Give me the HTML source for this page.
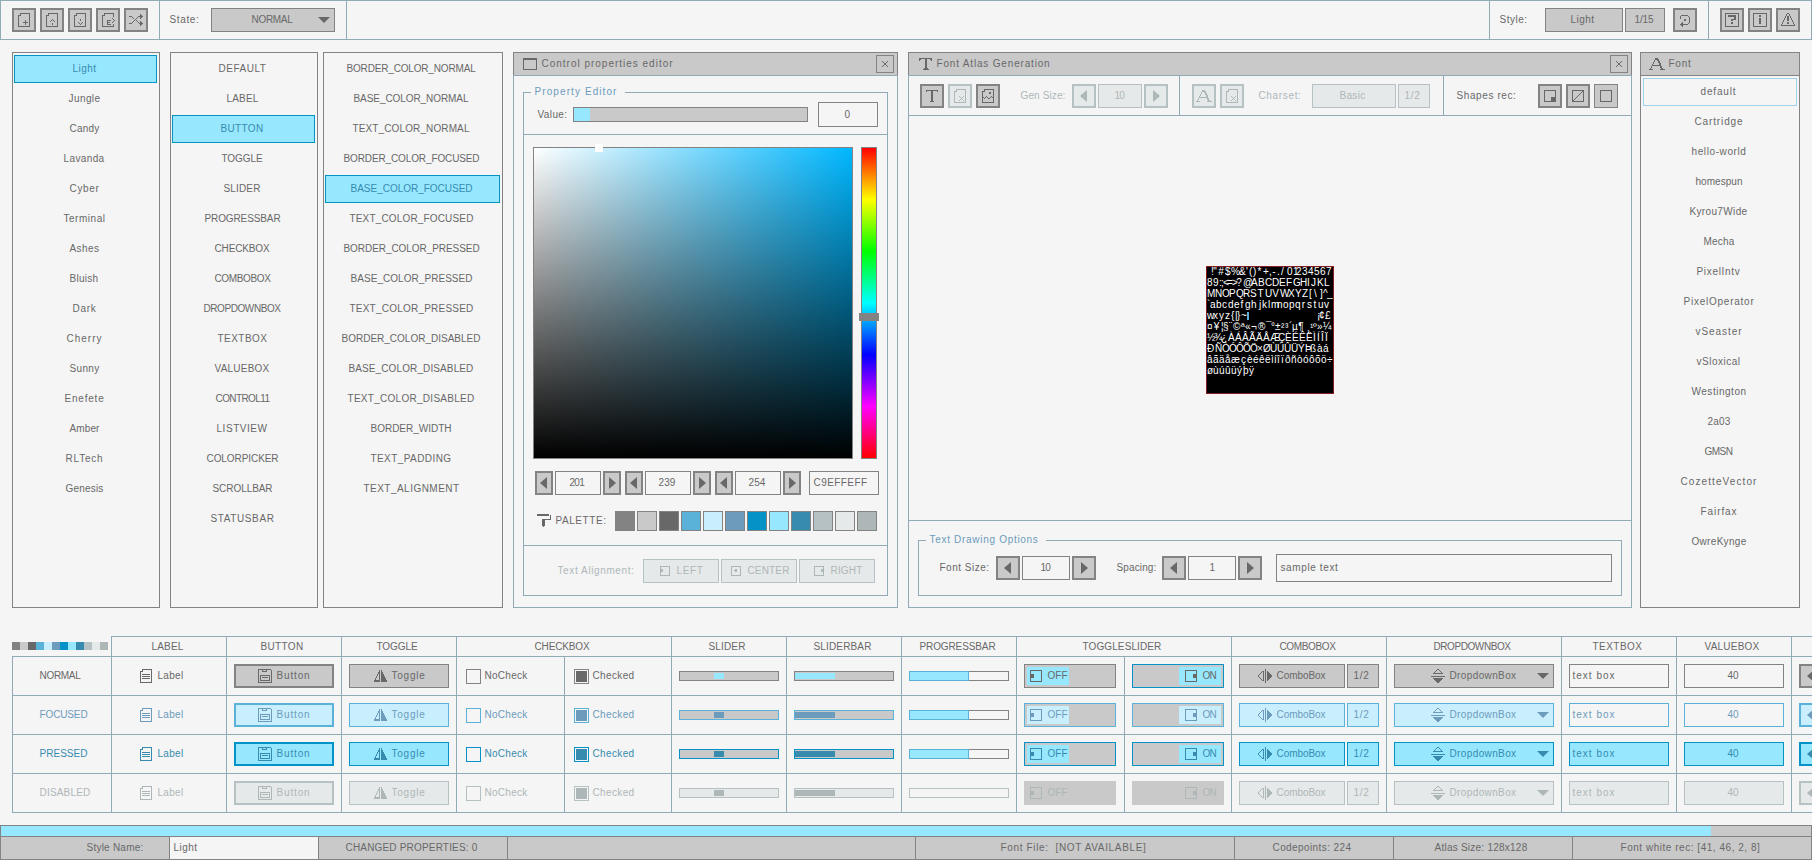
<!DOCTYPE html>
<html><head><meta charset="utf-8"><style>
html,body{margin:0;padding:0;}
body{width:1812px;height:860px;position:relative;overflow:hidden;background:#f5f5f5;font-family:"Liberation Sans",sans-serif;}
.a{position:absolute;box-sizing:border-box;}
.t{font-size:10px;white-space:nowrap;}
.g{position:absolute;height:10px;line-height:10px;font-size:10px;color:#fff;text-align:center;white-space:nowrap;}
</style></head><body>
<div class="a" style="left:0px;top:0px;width:1812px;height:40px;box-shadow:inset 0 0 0 1px #90abb5;"></div>
<div class="a" style="left:159px;top:0px;width:1px;height:40px;background:#90abb5"></div>
<div class="a" style="left:346px;top:0px;width:1px;height:40px;background:#90abb5"></div>
<div class="a" style="left:1489px;top:0px;width:1px;height:40px;background:#90abb5"></div>
<div class="a" style="left:1708px;top:0px;width:1px;height:40px;background:#90abb5"></div>
<div class="a" style="left:12px;top:8px;width:24px;height:24px;background:#c9c9c9;box-shadow:inset 0 0 0 2px #838383;"></div>
<svg class="a" style="left:16px;top:12px" width="16" height="16" shape-rendering="crispEdges"><path d="M4 1h10v1h-10zM4 2h1v1h-1zM13 2h1v1h-1zM2 3h3v1h-3zM13 3h1v1h-1zM2 4h1v1h-1zM13 4h1v1h-1zM2 5h1v1h-1zM13 5h1v1h-1zM2 6h1v1h-1zM13 6h1v1h-1zM2 7h1v1h-1zM13 7h1v1h-1zM2 8h1v1h-1zM9 8h1v1h-1zM13 8h1v1h-1zM2 9h1v1h-1zM9 9h1v1h-1zM13 9h1v1h-1zM2 10h1v1h-1zM7 10h5v1h-5zM13 10h1v1h-1zM2 11h1v1h-1zM9 11h1v1h-1zM13 11h1v1h-1zM2 12h1v1h-1zM9 12h1v1h-1zM13 12h1v1h-1zM2 13h1v1h-1zM13 13h1v1h-1zM2 14h12v1h-12z" fill="#686868"/></svg>
<div class="a" style="left:40px;top:8px;width:24px;height:24px;background:#c9c9c9;box-shadow:inset 0 0 0 2px #838383;"></div>
<svg class="a" style="left:44px;top:12px" width="16" height="16" shape-rendering="crispEdges"><path d="M4 1h10v1h-10zM4 2h1v1h-1zM13 2h1v1h-1zM2 3h3v1h-3zM13 3h1v1h-1zM2 4h1v1h-1zM13 4h1v1h-1zM2 5h1v1h-1zM13 5h1v1h-1zM2 6h1v1h-1zM13 6h1v1h-1zM2 7h1v1h-1zM8 7h1v1h-1zM13 7h1v1h-1zM2 8h1v1h-1zM7 8h1v1h-1zM9 8h1v1h-1zM13 8h1v1h-1zM2 9h1v1h-1zM6 9h1v1h-1zM10 9h1v1h-1zM13 9h1v1h-1zM2 10h1v1h-1zM13 10h1v1h-1zM2 11h1v1h-1zM8 11h1v1h-1zM13 11h1v1h-1zM2 12h1v1h-1zM8 12h1v1h-1zM13 12h1v1h-1zM2 13h1v1h-1zM13 13h1v1h-1zM2 14h12v1h-12z" fill="#686868"/></svg>
<div class="a" style="left:68px;top:8px;width:24px;height:24px;background:#c9c9c9;box-shadow:inset 0 0 0 2px #838383;"></div>
<svg class="a" style="left:72px;top:12px" width="16" height="16" shape-rendering="crispEdges"><path d="M4 1h10v1h-10zM4 2h1v1h-1zM13 2h1v1h-1zM2 3h3v1h-3zM13 3h1v1h-1zM2 4h1v1h-1zM13 4h1v1h-1zM2 5h1v1h-1zM13 5h1v1h-1zM2 6h1v1h-1zM13 6h1v1h-1zM2 7h1v1h-1zM8 7h1v1h-1zM13 7h1v1h-1zM2 8h1v1h-1zM8 8h1v1h-1zM13 8h1v1h-1zM2 9h1v1h-1zM13 9h1v1h-1zM2 10h1v1h-1zM6 10h1v1h-1zM10 10h1v1h-1zM13 10h1v1h-1zM2 11h1v1h-1zM7 11h1v1h-1zM9 11h1v1h-1zM13 11h1v1h-1zM2 12h1v1h-1zM8 12h1v1h-1zM13 12h1v1h-1zM2 13h1v1h-1zM13 13h1v1h-1zM2 14h12v1h-12z" fill="#686868"/></svg>
<div class="a" style="left:96px;top:8px;width:24px;height:24px;background:#c9c9c9;box-shadow:inset 0 0 0 2px #838383;"></div>
<svg class="a" style="left:100px;top:12px" width="16" height="16" shape-rendering="crispEdges"><path d="M4 1h10v1h-10zM4 2h1v1h-1zM13 2h1v1h-1zM2 3h3v1h-3zM13 3h1v1h-1zM2 4h1v1h-1zM13 4h1v1h-1zM2 5h1v1h-1zM2 6h1v1h-1zM12 6h1v1h-1zM2 7h1v1h-1zM13 7h1v1h-1zM2 8h1v1h-1zM7 8h4v1h-4zM14 8h1v1h-1zM2 9h1v1h-1zM7 9h1v1h-1zM13 9h1v1h-1zM2 10h1v1h-1zM7 10h3v1h-3zM12 10h1v1h-1zM2 11h1v1h-1zM7 11h1v1h-1zM2 12h1v1h-1zM7 12h4v1h-4zM13 12h1v1h-1zM2 13h1v1h-1zM13 13h1v1h-1zM2 14h12v1h-12z" fill="#686868"/></svg>
<div class="a" style="left:124px;top:8px;width:24px;height:24px;background:#c9c9c9;box-shadow:inset 0 0 0 2px #838383;"></div>
<svg class="a" style="left:128px;top:12px" width="16" height="16" shape-rendering="crispEdges"><path d="M12 2h1v1h-1zM12 3h2v1h-2zM1 4h3v1h-3zM10 4h5v1h-5zM4 5h1v1h-1zM9 5h1v1h-1zM12 5h2v1h-2zM5 6h1v1h-1zM8 6h1v1h-1zM12 6h1v1h-1zM7 7h1v1h-1zM6 8h1v1h-1zM8 8h1v1h-1zM5 9h1v1h-1zM9 9h1v1h-1zM12 9h1v1h-1zM4 10h1v1h-1zM10 10h1v1h-1zM12 10h2v1h-2zM1 11h3v1h-3zM11 11h4v1h-4zM12 12h2v1h-2zM12 13h1v1h-1z" fill="#686868"/></svg>
<div class="a t" style="left:169.5px;top:8px;width:40px;height:24px;line-height:24px;color:#686868;text-align:left;font-size:10px;"><span style="letter-spacing:0.64px;margin-right:-0.64px">State:</span></div>
<div class="a" style="left:211px;top:8px;width:124px;height:24px;background:#c9c9c9;box-shadow:inset 0 0 0 1px #838383;"></div>
<div class="a t" style="left:251.5px;top:8px;width:51px;height:24px;line-height:24px;color:#686868;text-align:left;font-size:10px;"><span style="letter-spacing:-0.30px;margin-right:0.30px">NORMAL</span></div>
<svg class="a" style="left:318px;top:17px" width="12" height="6" viewBox="0 0 12 6"><path d="M0 0H12L6.0 6z" fill="#686868"/></svg>
<div class="a t" style="left:1499.5px;top:8px;width:44px;height:24px;line-height:24px;color:#686868;text-align:left;font-size:10px;"><span style="letter-spacing:0.50px;margin-right:-0.50px">Style:</span></div>
<div class="a" style="left:1545px;top:8px;width:78px;height:24px;background:#c9c9c9;box-shadow:inset 0 0 0 1px #838383;"></div>
<div class="a t" style="left:1570.5px;top:8px;width:34px;height:24px;line-height:24px;color:#686868;text-align:left;font-size:10px;"><span style="letter-spacing:0.46px;margin-right:-0.46px">Light</span></div>
<div class="a" style="left:1625px;top:8px;width:40px;height:24px;background:#c9c9c9;box-shadow:inset 0 0 0 1px #838383;"></div>
<div class="a t" style="left:1634.5px;top:8px;width:29px;height:24px;line-height:24px;color:#686868;text-align:left;font-size:10px;"><span style="letter-spacing:-0.12px;margin-right:0.12px">1/15</span></div>
<div class="a" style="left:1673px;top:8px;width:24px;height:24px;background:#c9c9c9;box-shadow:inset 0 0 0 2px #838383;"></div>
<svg class="a" style="left:1677px;top:12px" width="16" height="16" shape-rendering="crispEdges"><path d="M4 3h7v1h-7zM3 4h1v1h-1zM11 4h1v1h-1zM3 5h1v1h-1zM12 5h1v1h-1zM3 6h1v1h-1zM12 6h1v1h-1zM7 7h2v1h-2zM12 7h1v1h-1zM7 8h2v1h-2zM12 8h1v1h-1zM12 9h1v1h-1zM5 10h1v1h-1zM12 10h1v1h-1zM4 11h2v1h-2zM11 11h1v1h-1zM3 12h8v1h-8zM4 13h2v1h-2zM5 14h1v1h-1z" fill="#686868"/></svg>
<div class="a" style="left:1720px;top:8px;width:24px;height:24px;background:#c9c9c9;box-shadow:inset 0 0 0 2px #838383;"></div>
<svg class="a" style="left:1724px;top:12px" width="16" height="16" shape-rendering="crispEdges"><path d="M1 1h14v1h-14zM1 2h1v1h-1zM14 2h1v1h-1zM1 3h1v1h-1zM4 3h8v1h-8zM14 3h1v1h-1zM1 4h1v1h-1zM4 4h8v1h-8zM14 4h1v1h-1zM1 5h1v1h-1zM10 5h2v1h-2zM14 5h1v1h-1zM1 6h1v1h-1zM10 6h2v1h-2zM14 6h1v1h-1zM1 7h1v1h-1zM7 7h5v1h-5zM14 7h1v1h-1zM1 8h1v1h-1zM7 8h2v1h-2zM14 8h1v1h-1zM1 9h1v1h-1zM14 9h1v1h-1zM1 10h1v1h-1zM7 10h2v1h-2zM14 10h1v1h-1zM1 11h1v1h-1zM7 11h2v1h-2zM14 11h1v1h-1zM1 12h1v1h-1zM14 12h1v1h-1zM1 13h1v1h-1zM14 13h1v1h-1zM1 14h14v1h-14z" fill="#686868"/></svg>
<div class="a" style="left:1748px;top:8px;width:24px;height:24px;background:#c9c9c9;box-shadow:inset 0 0 0 2px #838383;"></div>
<svg class="a" style="left:1752px;top:12px" width="16" height="16" shape-rendering="crispEdges"><path d="M1 1h14v1h-14zM1 2h1v1h-1zM14 2h1v1h-1zM1 3h1v1h-1zM7 3h2v1h-2zM14 3h1v1h-1zM1 4h1v1h-1zM7 4h2v1h-2zM14 4h1v1h-1zM1 5h1v1h-1zM14 5h1v1h-1zM1 6h1v1h-1zM7 6h2v1h-2zM14 6h1v1h-1zM1 7h1v1h-1zM7 7h2v1h-2zM14 7h1v1h-1zM1 8h1v1h-1zM7 8h2v1h-2zM14 8h1v1h-1zM1 9h1v1h-1zM7 9h2v1h-2zM14 9h1v1h-1zM1 10h1v1h-1zM7 10h2v1h-2zM14 10h1v1h-1zM1 11h1v1h-1zM7 11h2v1h-2zM14 11h1v1h-1zM1 12h1v1h-1zM14 12h1v1h-1zM1 13h1v1h-1zM14 13h1v1h-1zM1 14h14v1h-14z" fill="#686868"/></svg>
<div class="a" style="left:1776px;top:8px;width:24px;height:24px;background:#c9c9c9;box-shadow:inset 0 0 0 2px #838383;"></div>
<svg class="a" style="left:1780px;top:12px" width="16" height="16" shape-rendering="crispEdges"><path d="M7 1h2v1h-2zM6 2h1v1h-1zM9 2h1v1h-1zM6 3h1v1h-1zM9 3h1v1h-1zM5 4h1v1h-1zM7 4h2v1h-2zM10 4h1v1h-1zM5 5h1v1h-1zM7 5h2v1h-2zM10 5h1v1h-1zM4 6h1v1h-1zM7 6h2v1h-2zM11 6h1v1h-1zM4 7h1v1h-1zM7 7h2v1h-2zM11 7h1v1h-1zM3 8h1v1h-1zM7 8h2v1h-2zM12 8h1v1h-1zM3 9h1v1h-1zM12 9h1v1h-1zM2 10h1v1h-1zM7 10h2v1h-2zM13 10h1v1h-1zM2 11h1v1h-1zM7 11h2v1h-2zM13 11h1v1h-1zM1 12h1v1h-1zM14 12h1v1h-1zM1 13h14v1h-14z" fill="#686868"/></svg>
<div class="a" style="left:12px;top:52px;width:148px;height:556px;box-shadow:inset 0 0 0 1px #838383;"></div>
<div class="a" style="left:14px;top:55px;width:143px;height:28px;background:#97e8ff;box-shadow:inset 0 0 0 1px #0492c7;"></div>
<div class="a t" style="left:72.5px;top:55px;width:34px;height:28px;line-height:28px;color:#368baf;text-align:left;font-size:10px;"><span style="letter-spacing:0.46px;margin-right:-0.46px">Light</span></div>
<div class="a t" style="left:68.5px;top:85px;width:42px;height:28px;line-height:28px;color:#686868;text-align:left;font-size:10px;"><span style="letter-spacing:0.42px;margin-right:-0.42px">Jungle</span></div>
<div class="a t" style="left:69.5px;top:115px;width:40px;height:28px;line-height:28px;color:#686868;text-align:left;font-size:10px;"><span style="letter-spacing:0.22px;margin-right:-0.22px">Candy</span></div>
<div class="a t" style="left:63.5px;top:145px;width:51px;height:28px;line-height:28px;color:#686868;text-align:left;font-size:10px;"><span style="letter-spacing:0.38px;margin-right:-0.38px">Lavanda</span></div>
<div class="a t" style="left:69.5px;top:175px;width:40px;height:28px;line-height:28px;color:#686868;text-align:left;font-size:10px;"><span style="letter-spacing:0.66px;margin-right:-0.66px">Cyber</span></div>
<div class="a t" style="left:63.5px;top:205px;width:52px;height:28px;line-height:28px;color:#686868;text-align:left;font-size:10px;"><span style="letter-spacing:0.53px;margin-right:-0.53px">Terminal</span></div>
<div class="a t" style="left:69.5px;top:235px;width:40px;height:28px;line-height:28px;color:#686868;text-align:left;font-size:10px;"><span style="letter-spacing:0.44px;margin-right:-0.44px">Ashes</span></div>
<div class="a t" style="left:69.5px;top:265px;width:39px;height:28px;line-height:28px;color:#686868;text-align:left;font-size:10px;"><span style="letter-spacing:0.29px;margin-right:-0.29px">Bluish</span></div>
<div class="a t" style="left:72.5px;top:295px;width:34px;height:28px;line-height:28px;color:#686868;text-align:left;font-size:10px;"><span style="letter-spacing:0.72px;margin-right:-0.72px">Dark</span></div>
<div class="a t" style="left:66.5px;top:325px;width:46px;height:28px;line-height:28px;color:#686868;text-align:left;font-size:10px;"><span style="letter-spacing:1.00px;margin-right:-1.00px">Cherry</span></div>
<div class="a t" style="left:69.5px;top:355px;width:40px;height:28px;line-height:28px;color:#686868;text-align:left;font-size:10px;"><span style="letter-spacing:0.33px;margin-right:-0.33px">Sunny</span></div>
<div class="a t" style="left:64.5px;top:385px;width:50px;height:28px;line-height:28px;color:#686868;text-align:left;font-size:10px;"><span style="letter-spacing:0.79px;margin-right:-0.79px">Enefete</span></div>
<div class="a t" style="left:69.5px;top:415px;width:40px;height:28px;line-height:28px;color:#686868;text-align:left;font-size:10px;"><span style="letter-spacing:0.11px;margin-right:-0.11px">Amber</span></div>
<div class="a t" style="left:65.5px;top:445px;width:48px;height:28px;line-height:28px;color:#686868;text-align:left;font-size:10px;"><span style="letter-spacing:0.80px;margin-right:-0.80px">RLTech</span></div>
<div class="a t" style="left:65.5px;top:475px;width:48px;height:28px;line-height:28px;color:#686868;text-align:left;font-size:10px;"><span style="letter-spacing:0.19px;margin-right:-0.19px">Genesis</span></div>
<div class="a" style="left:170px;top:52px;width:148px;height:556px;box-shadow:inset 0 0 0 1px #838383;"></div>
<div class="a t" style="left:218.5px;top:55px;width:58px;height:28px;line-height:28px;color:#686868;text-align:left;font-size:10px;"><span style="letter-spacing:0.53px;margin-right:-0.53px">DEFAULT</span></div>
<div class="a t" style="left:226.5px;top:85px;width:42px;height:28px;line-height:28px;color:#686868;text-align:left;font-size:10px;"><span style="letter-spacing:0.17px;margin-right:-0.17px">LABEL</span></div>
<div class="a" style="left:172px;top:115px;width:143px;height:28px;background:#97e8ff;box-shadow:inset 0 0 0 1px #0492c7;"></div>
<div class="a t" style="left:220.5px;top:115px;width:53px;height:28px;line-height:28px;color:#368baf;text-align:left;font-size:10px;"><span style="letter-spacing:0.34px;margin-right:-0.34px">BUTTON</span></div>
<div class="a t" style="left:221.5px;top:145px;width:51px;height:28px;line-height:28px;color:#686868;text-align:left;font-size:10px;"><span style="letter-spacing:-0.08px;margin-right:0.08px">TOGGLE</span></div>
<div class="a t" style="left:223.5px;top:175px;width:47px;height:28px;line-height:28px;color:#686868;text-align:left;font-size:10px;"><span style="letter-spacing:0.15px;margin-right:-0.15px">SLIDER</span></div>
<div class="a t" style="left:204.5px;top:205px;width:86px;height:28px;line-height:28px;color:#686868;text-align:left;font-size:10px;"><span style="letter-spacing:-0.11px;margin-right:0.11px">PROGRESSBAR</span></div>
<div class="a t" style="left:214.5px;top:235px;width:65px;height:28px;line-height:28px;color:#686868;text-align:left;font-size:10px;"><span style="letter-spacing:-0.14px;margin-right:0.14px">CHECKBOX</span></div>
<div class="a t" style="left:214.5px;top:265px;width:66px;height:28px;line-height:28px;color:#686868;text-align:left;font-size:10px;"><span style="letter-spacing:-0.36px;margin-right:0.36px">COMBOBOX</span></div>
<div class="a t" style="left:203.5px;top:295px;width:87px;height:28px;line-height:28px;color:#686868;text-align:left;font-size:10px;"><span style="letter-spacing:-0.42px;margin-right:0.42px">DROPDOWNBOX</span></div>
<div class="a t" style="left:217.5px;top:325px;width:60px;height:28px;line-height:28px;color:#686868;text-align:left;font-size:10px;"><span style="letter-spacing:0.47px;margin-right:-0.47px">TEXTBOX</span></div>
<div class="a t" style="left:214.5px;top:355px;width:65px;height:28px;line-height:28px;color:#686868;text-align:left;font-size:10px;"><span style="letter-spacing:0.23px;margin-right:-0.23px">VALUEBOX</span></div>
<div class="a t" style="left:215.5px;top:385px;width:64px;height:28px;line-height:28px;color:#686868;text-align:left;font-size:10px;"><span style="letter-spacing:-0.59px;margin-right:0.59px">CONTROL11</span></div>
<div class="a t" style="left:216.5px;top:415px;width:61px;height:28px;line-height:28px;color:#686868;text-align:left;font-size:10px;"><span style="letter-spacing:0.54px;margin-right:-0.54px">LISTVIEW</span></div>
<div class="a t" style="left:206.5px;top:445px;width:82px;height:28px;line-height:28px;color:#686868;text-align:left;font-size:10px;"><span style="letter-spacing:-0.07px;margin-right:0.07px">COLORPICKER</span></div>
<div class="a t" style="left:212.5px;top:475px;width:70px;height:28px;line-height:28px;color:#686868;text-align:left;font-size:10px;"><span style="letter-spacing:-0.06px;margin-right:0.06px">SCROLLBAR</span></div>
<div class="a t" style="left:210.5px;top:505px;width:74px;height:28px;line-height:28px;color:#686868;text-align:left;font-size:10px;"><span style="letter-spacing:0.61px;margin-right:-0.61px">STATUSBAR</span></div>
<div class="a" style="left:323px;top:52px;width:180px;height:556px;box-shadow:inset 0 0 0 1px #838383;"></div>
<div class="a t" style="left:346.5px;top:55px;width:139px;height:28px;line-height:28px;color:#686868;text-align:left;font-size:10px;"><span style="letter-spacing:-0.17px;margin-right:0.17px">BORDER_COLOR_NORMAL</span></div>
<div class="a t" style="left:353.5px;top:85px;width:125px;height:28px;line-height:28px;color:#686868;text-align:left;font-size:10px;"><span style="letter-spacing:-0.07px;margin-right:0.07px">BASE_COLOR_NORMAL</span></div>
<div class="a t" style="left:352.5px;top:115px;width:127px;height:28px;line-height:28px;color:#686868;text-align:left;font-size:10px;"><span style="letter-spacing:0.12px;margin-right:-0.12px">TEXT_COLOR_NORMAL</span></div>
<div class="a t" style="left:343.5px;top:145px;width:146px;height:28px;line-height:28px;color:#686868;text-align:left;font-size:10px;"><span style="letter-spacing:-0.12px;margin-right:0.12px">BORDER_COLOR_FOCUSED</span></div>
<div class="a" style="left:325px;top:175px;width:175px;height:28px;background:#97e8ff;box-shadow:inset 0 0 0 1px #0492c7;"></div>
<div class="a t" style="left:350.5px;top:175px;width:132px;height:28px;line-height:28px;color:#368baf;text-align:left;font-size:10px;"><span style="letter-spacing:-0.01px;margin-right:0.01px">BASE_COLOR_FOCUSED</span></div>
<div class="a t" style="left:349.5px;top:205px;width:134px;height:28px;line-height:28px;color:#686868;text-align:left;font-size:10px;"><span style="letter-spacing:0.16px;margin-right:-0.16px">TEXT_COLOR_FOCUSED</span></div>
<div class="a t" style="left:343.5px;top:235px;width:146px;height:28px;line-height:28px;color:#686868;text-align:left;font-size:10px;"><span style="letter-spacing:-0.06px;margin-right:0.06px">BORDER_COLOR_PRESSED</span></div>
<div class="a t" style="left:350.5px;top:265px;width:132px;height:28px;line-height:28px;color:#686868;text-align:left;font-size:10px;"><span style="letter-spacing:0.05px;margin-right:-0.05px">BASE_COLOR_PRESSED</span></div>
<div class="a t" style="left:349.5px;top:295px;width:134px;height:28px;line-height:28px;color:#686868;text-align:left;font-size:10px;"><span style="letter-spacing:0.22px;margin-right:-0.22px">TEXT_COLOR_PRESSED</span></div>
<div class="a t" style="left:341.5px;top:325px;width:149px;height:28px;line-height:28px;color:#686868;text-align:left;font-size:10px;"><span style="letter-spacing:0.00px;margin-right:-0.00px">BORDER_COLOR_DISABLED</span></div>
<div class="a t" style="left:348.5px;top:355px;width:135px;height:28px;line-height:28px;color:#686868;text-align:left;font-size:10px;"><span style="letter-spacing:0.11px;margin-right:-0.11px">BASE_COLOR_DISABLED</span></div>
<div class="a t" style="left:347.5px;top:385px;width:137px;height:28px;line-height:28px;color:#686868;text-align:left;font-size:10px;"><span style="letter-spacing:0.28px;margin-right:-0.28px">TEXT_COLOR_DISABLED</span></div>
<div class="a t" style="left:370.5px;top:415px;width:91px;height:28px;line-height:28px;color:#686868;text-align:left;font-size:10px;"><span style="letter-spacing:-0.01px;margin-right:0.01px">BORDER_WIDTH</span></div>
<div class="a t" style="left:370.5px;top:445px;width:91px;height:28px;line-height:28px;color:#686868;text-align:left;font-size:10px;"><span style="letter-spacing:0.42px;margin-right:-0.42px">TEXT_PADDING</span></div>
<div class="a t" style="left:363.5px;top:475px;width:106px;height:28px;line-height:28px;color:#686868;text-align:left;font-size:10px;"><span style="letter-spacing:0.47px;margin-right:-0.47px">TEXT_ALIGNMENT</span></div>
<div class="a" style="left:513px;top:52px;width:385px;height:556px;box-shadow:inset 0 0 0 1px #90abb5;"></div>
<div class="a" style="left:513px;top:52px;width:385px;height:24px;background:#c9c9c9;box-shadow:inset 0 0 0 1px #838383;"></div>
<div class="a" style="left:513px;top:75px;width:385px;height:1px;background:#90abb5"></div>
<svg class="a" style="left:522px;top:56px" width="16" height="16" shape-rendering="crispEdges"><path d="M1 2h14v1h-14zM1 3h14v1h-14zM1 4h1v1h-1zM14 4h1v1h-1zM1 5h1v1h-1zM14 5h1v1h-1zM1 6h1v1h-1zM14 6h1v1h-1zM1 7h1v1h-1zM14 7h1v1h-1zM1 8h1v1h-1zM14 8h1v1h-1zM1 9h1v1h-1zM14 9h1v1h-1zM1 10h1v1h-1zM14 10h1v1h-1zM1 11h1v1h-1zM14 11h1v1h-1zM1 12h1v1h-1zM14 12h1v1h-1zM1 13h14v1h-14z" fill="#686868"/></svg>
<div class="a t" style="left:541.5px;top:52px;width:136px;height:24px;line-height:24px;color:#686868;text-align:left;font-size:10px;"><span style="letter-spacing:0.99px;margin-right:-0.99px">Control properties editor</span></div>
<div class="a" style="left:876px;top:55px;width:18px;height:18px;box-shadow:inset 0 0 0 1px #838383;"></div>
<svg class="a" style="left:877px;top:56px" width="16" height="16" shape-rendering="crispEdges"><path d="M5 5h1v1h-1zM10 5h1v1h-1zM6 6h1v1h-1zM9 6h1v1h-1zM7 7h2v1h-2zM7 8h2v1h-2zM6 9h1v1h-1zM9 9h1v1h-1zM5 10h1v1h-1zM10 10h1v1h-1z" fill="#686868"/></svg>
<div class="a" style="left:523px;top:92px;width:1px;height:504px;background:#90abb5"></div>
<div class="a" style="left:523px;top:595px;width:365px;height:1px;background:#90abb5"></div>
<div class="a" style="left:887px;top:92px;width:1px;height:504px;background:#90abb5"></div>
<div class="a" style="left:523px;top:92px;width:8px;height:1px;background:#90abb5"></div>
<div class="a t" style="left:534.5px;top:86px;width:87px;height:12px;line-height:12px;color:#6c9bbc;text-align:left;font-size:10px;"><span style="letter-spacing:1.09px;margin-right:-1.09px">Property Editor</span></div>
<div class="a" style="left:625px;top:92px;width:263px;height:1px;background:#90abb5"></div>
<div class="a" style="left:523px;top:134px;width:365px;height:1px;background:#90abb5"></div>
<div class="a" style="left:523px;top:545px;width:365px;height:1px;background:#90abb5"></div>
<div class="a t" style="left:537.5px;top:102px;width:40px;height:25px;line-height:25px;color:#686868;text-align:left;font-size:10px;"><span style="letter-spacing:0.40px;margin-right:-0.40px">Value:</span></div>
<div class="a" style="left:573px;top:107px;width:235px;height:15px;background:#c9c9c9;box-shadow:inset 0 0 0 1px #838383;"></div>
<div class="a" style="left:574px;top:108px;width:16px;height:13px;background:#97e8ff;"></div>
<div class="a" style="left:818px;top:102px;width:60px;height:25px;box-shadow:inset 0 0 0 1px #838383;"></div>
<div class="a t" style="left:844.5px;top:102px;width:15px;height:25px;line-height:25px;color:#686868;text-align:left;font-size:10px;"><span style="letter-spacing:-0.56px;margin-right:0.56px">0</span></div>
<div class="a" style="left:533px;top:147px;width:320px;height:312px;border:1px solid #838383;background:linear-gradient(to bottom, rgba(0,0,0,0), #000), linear-gradient(to right, #fff, rgb(0,183,255));"></div>
<div class="a" style="left:595px;top:144px;width:8px;height:8px;background:#ffffff;"></div>
<div class="a" style="left:861px;top:147px;width:16px;height:312px;border:1px solid #838383;background:linear-gradient(to bottom, #f00 0%, #ff0 16.67%, #0f0 33.33%, #0ff 50%, #00f 66.67%, #f0f 83.33%, #f00 100%);"></div>
<div class="a" style="left:859px;top:313px;width:20px;height:8px;background:#838383;"></div>
<div class="a" style="left:535px;top:471px;width:18px;height:24px;background:#c9c9c9;box-shadow:inset 0 0 0 2px #838383;"></div>
<svg class="a" style="left:540px;top:477px" width="7" height="12" viewBox="0 0 7 12"><path d="M7 0V12L0 6.0z" fill="#686868"/></svg>
<div class="a" style="left:555px;top:471px;width:46px;height:24px;box-shadow:inset 0 0 0 1px #838383;"></div>
<div class="a t" style="left:569.5px;top:471px;width:24px;height:24px;line-height:24px;color:#686868;text-align:left;font-size:10px;"><span style="letter-spacing:-0.70px;margin-right:0.70px">201</span></div>
<div class="a" style="left:603px;top:471px;width:18px;height:24px;background:#c9c9c9;box-shadow:inset 0 0 0 2px #838383;"></div>
<svg class="a" style="left:609px;top:477px" width="7" height="12" viewBox="0 0 7 12"><path d="M0 0V12L7 6.0z" fill="#686868"/></svg>
<div class="a" style="left:625px;top:471px;width:18px;height:24px;background:#c9c9c9;box-shadow:inset 0 0 0 2px #838383;"></div>
<svg class="a" style="left:630px;top:477px" width="7" height="12" viewBox="0 0 7 12"><path d="M7 0V12L0 6.0z" fill="#686868"/></svg>
<div class="a" style="left:645px;top:471px;width:46px;height:24px;box-shadow:inset 0 0 0 1px #838383;"></div>
<div class="a t" style="left:658.5px;top:471px;width:27px;height:24px;line-height:24px;color:#686868;text-align:left;font-size:10px;"><span style="letter-spacing:0.10px;margin-right:-0.10px">239</span></div>
<div class="a" style="left:693px;top:471px;width:18px;height:24px;background:#c9c9c9;box-shadow:inset 0 0 0 2px #838383;"></div>
<svg class="a" style="left:699px;top:477px" width="7" height="12" viewBox="0 0 7 12"><path d="M0 0V12L7 6.0z" fill="#686868"/></svg>
<div class="a" style="left:715px;top:471px;width:18px;height:24px;background:#c9c9c9;box-shadow:inset 0 0 0 2px #838383;"></div>
<svg class="a" style="left:720px;top:477px" width="7" height="12" viewBox="0 0 7 12"><path d="M7 0V12L0 6.0z" fill="#686868"/></svg>
<div class="a" style="left:735px;top:471px;width:46px;height:24px;box-shadow:inset 0 0 0 1px #838383;"></div>
<div class="a t" style="left:748.5px;top:471px;width:27px;height:24px;line-height:24px;color:#686868;text-align:left;font-size:10px;"><span style="letter-spacing:0.10px;margin-right:-0.10px">254</span></div>
<div class="a" style="left:783px;top:471px;width:18px;height:24px;background:#c9c9c9;box-shadow:inset 0 0 0 2px #838383;"></div>
<svg class="a" style="left:789px;top:477px" width="7" height="12" viewBox="0 0 7 12"><path d="M0 0V12L7 6.0z" fill="#686868"/></svg>
<div class="a" style="left:809px;top:471px;width:70px;height:24px;box-shadow:inset 0 0 0 1px #838383;"></div>
<div class="a t" style="left:813.5px;top:471px;width:64px;height:24px;line-height:24px;color:#686868;text-align:left;font-size:10px;"><span style="letter-spacing:0.43px;margin-right:-0.43px">C9EFFEFF</span></div>
<svg class="a" style="left:536px;top:513px" width="16" height="16" shape-rendering="crispEdges"><path d="M1 1h12v1h-12zM1 2h12v1h-12zM14 2h1v1h-1zM14 3h1v1h-1zM14 4h1v1h-1zM14 5h1v1h-1zM6 6h9v1h-9zM6 7h3v1h-3zM6 8h3v1h-3zM6 9h3v1h-3zM6 10h3v1h-3zM6 11h3v1h-3zM6 12h3v1h-3zM7 13h1v1h-1z" fill="#686868"/></svg>
<div class="a t" style="left:555.5px;top:511px;width:60px;height:20px;line-height:20px;color:#686868;text-align:left;font-size:10px;"><span style="letter-spacing:0.56px;margin-right:-0.56px">PALETTE:</span></div>
<div class="a" style="left:615px;top:511px;width:20px;height:20px;background:#838383;box-shadow:inset 0 0 0 1px #838383;"></div>
<div class="a" style="left:637px;top:511px;width:20px;height:20px;background:#c9c9c9;box-shadow:inset 0 0 0 1px #838383;"></div>
<div class="a" style="left:659px;top:511px;width:20px;height:20px;background:#686868;box-shadow:inset 0 0 0 1px #838383;"></div>
<div class="a" style="left:681px;top:511px;width:20px;height:20px;background:#5bb2d9;box-shadow:inset 0 0 0 1px #838383;"></div>
<div class="a" style="left:703px;top:511px;width:20px;height:20px;background:#c9effe;box-shadow:inset 0 0 0 1px #838383;"></div>
<div class="a" style="left:725px;top:511px;width:20px;height:20px;background:#6c9bbc;box-shadow:inset 0 0 0 1px #838383;"></div>
<div class="a" style="left:747px;top:511px;width:20px;height:20px;background:#0492c7;box-shadow:inset 0 0 0 1px #838383;"></div>
<div class="a" style="left:769px;top:511px;width:20px;height:20px;background:#97e8ff;box-shadow:inset 0 0 0 1px #838383;"></div>
<div class="a" style="left:791px;top:511px;width:20px;height:20px;background:#368baf;box-shadow:inset 0 0 0 1px #838383;"></div>
<div class="a" style="left:813px;top:511px;width:20px;height:20px;background:#b5c1c2;box-shadow:inset 0 0 0 1px #838383;"></div>
<div class="a" style="left:835px;top:511px;width:20px;height:20px;background:#e6e9e9;box-shadow:inset 0 0 0 1px #838383;"></div>
<div class="a" style="left:857px;top:511px;width:20px;height:20px;background:#aeb7b8;box-shadow:inset 0 0 0 1px #838383;"></div>
<div class="a t" style="left:557.5px;top:559px;width:96px;height:24px;line-height:24px;color:#aeb7b8;text-align:left;font-size:10px;"><span style="letter-spacing:0.61px;margin-right:-0.61px">Text Alignment:</span></div>
<div class="a" style="left:643px;top:559px;width:76px;height:24px;background:#e6e9e9;box-shadow:inset 0 0 0 1px #b5c1c2;"></div>
<svg class="a" style="left:657px;top:563px" width="16" height="16" shape-rendering="crispEdges"><path d="M3 3h10v1h-10zM3 4h1v1h-1zM12 4h1v1h-1zM3 5h1v1h-1zM12 5h1v1h-1zM3 6h3v1h-3zM12 6h1v1h-1zM3 7h3v1h-3zM12 7h1v1h-1zM3 8h3v1h-3zM12 8h1v1h-1zM3 9h1v1h-1zM12 9h1v1h-1zM3 10h1v1h-1zM12 10h1v1h-1zM3 11h1v1h-1zM12 11h1v1h-1zM3 12h10v1h-10z" fill="#aeb7b8"/></svg>
<div class="a t" style="left:676.5px;top:559px;width:31px;height:24px;line-height:24px;color:#aeb7b8;text-align:left;font-size:10px;"><span style="letter-spacing:0.64px;margin-right:-0.64px">LEFT</span></div>
<div class="a" style="left:721px;top:559px;width:76px;height:24px;background:#e6e9e9;box-shadow:inset 0 0 0 1px #b5c1c2;"></div>
<svg class="a" style="left:728px;top:563px" width="16" height="16" shape-rendering="crispEdges"><path d="M3 3h10v1h-10zM3 4h1v1h-1zM12 4h1v1h-1zM3 5h1v1h-1zM12 5h1v1h-1zM3 6h1v1h-1zM7 6h2v1h-2zM12 6h1v1h-1zM3 7h1v1h-1zM6 7h3v1h-3zM12 7h1v1h-1zM3 8h1v1h-1zM7 8h2v1h-2zM12 8h1v1h-1zM3 9h1v1h-1zM12 9h1v1h-1zM3 10h1v1h-1zM12 10h1v1h-1zM3 11h1v1h-1zM12 11h1v1h-1zM3 12h10v1h-10z" fill="#aeb7b8"/></svg>
<div class="a t" style="left:747.5px;top:559px;width:46px;height:24px;line-height:24px;color:#aeb7b8;text-align:left;font-size:10px;"><span style="letter-spacing:0.15px;margin-right:-0.15px">CENTER</span></div>
<div class="a" style="left:799px;top:559px;width:76px;height:24px;background:#e6e9e9;box-shadow:inset 0 0 0 1px #b5c1c2;"></div>
<svg class="a" style="left:811px;top:563px" width="16" height="16" shape-rendering="crispEdges"><path d="M3 3h10v1h-10zM3 4h1v1h-1zM12 4h1v1h-1zM3 5h1v1h-1zM12 5h1v1h-1zM3 6h1v1h-1zM10 6h3v1h-3zM3 7h1v1h-1zM10 7h3v1h-3zM3 8h1v1h-1zM10 8h3v1h-3zM3 9h1v1h-1zM12 9h1v1h-1zM3 10h1v1h-1zM12 10h1v1h-1zM3 11h1v1h-1zM12 11h1v1h-1zM3 12h10v1h-10z" fill="#aeb7b8"/></svg>
<div class="a t" style="left:830.5px;top:559px;width:36px;height:24px;line-height:24px;color:#aeb7b8;text-align:left;font-size:10px;"><span style="letter-spacing:0.18px;margin-right:-0.18px">RIGHT</span></div>
<div class="a" style="left:908px;top:52px;width:724px;height:556px;box-shadow:inset 0 0 0 1px #90abb5;"></div>
<div class="a" style="left:908px;top:52px;width:724px;height:24px;background:#c9c9c9;box-shadow:inset 0 0 0 1px #838383;"></div>
<div class="a" style="left:908px;top:75px;width:724px;height:1px;background:#90abb5"></div>
<svg class="a" style="left:917px;top:56px" width="16" height="16" shape-rendering="crispEdges"><path d="M2 2h13v1h-13zM2 3h2v1h-2zM8 3h2v1h-2zM13 3h2v1h-2zM2 4h1v1h-1zM8 4h2v1h-2zM14 4h1v1h-1zM8 5h2v1h-2zM8 6h2v1h-2zM8 7h2v1h-2zM8 8h2v1h-2zM8 9h2v1h-2zM8 10h2v1h-2zM8 11h2v1h-2zM7 12h4v1h-4zM6 13h6v1h-6z" fill="#686868"/></svg>
<div class="a t" style="left:936.5px;top:52px;width:118px;height:24px;line-height:24px;color:#686868;text-align:left;font-size:10px;"><span style="letter-spacing:0.82px;margin-right:-0.82px">Font Atlas Generation</span></div>
<div class="a" style="left:1610px;top:55px;width:18px;height:18px;box-shadow:inset 0 0 0 1px #838383;"></div>
<svg class="a" style="left:1611px;top:56px" width="16" height="16" shape-rendering="crispEdges"><path d="M5 5h1v1h-1zM10 5h1v1h-1zM6 6h1v1h-1zM9 6h1v1h-1zM7 7h2v1h-2zM7 8h2v1h-2zM6 9h1v1h-1zM9 9h1v1h-1zM5 10h1v1h-1zM10 10h1v1h-1z" fill="#686868"/></svg>
<div class="a" style="left:908px;top:115px;width:724px;height:1px;background:#90abb5"></div>
<div class="a" style="left:1179px;top:76px;width:1px;height:39px;background:#90abb5"></div>
<div class="a" style="left:1443px;top:76px;width:1px;height:39px;background:#90abb5"></div>
<div class="a" style="left:920px;top:84px;width:24px;height:24px;background:#c9c9c9;box-shadow:inset 0 0 0 2px #838383;"></div>
<svg class="a" style="left:924px;top:88px" width="16" height="16" shape-rendering="crispEdges"><path d="M2 2h12v1h-12zM2 3h1v1h-1zM7 3h2v1h-2zM13 3h1v1h-1zM7 4h2v1h-2zM7 5h2v1h-2zM7 6h2v1h-2zM7 7h2v1h-2zM7 8h2v1h-2zM7 9h2v1h-2zM7 10h2v1h-2zM7 11h2v1h-2zM7 12h2v1h-2zM6 13h4v1h-4z" fill="#686868"/></svg>
<div class="a" style="left:948px;top:84px;width:24px;height:24px;background:#e6e9e9;box-shadow:inset 0 0 0 2px #b5c1c2;"></div>
<svg class="a" style="left:952px;top:88px" width="16" height="16" shape-rendering="crispEdges"><path d="M4 1h10v1h-10zM4 2h1v1h-1zM13 2h1v1h-1zM2 3h3v1h-3zM13 3h1v1h-1zM2 4h1v1h-1zM13 4h1v1h-1zM2 5h1v1h-1zM13 5h1v1h-1zM2 6h1v1h-1zM13 6h1v1h-1zM2 7h1v1h-1zM13 7h1v1h-1zM2 8h1v1h-1zM7 8h1v1h-1zM11 8h1v1h-1zM13 8h1v1h-1zM2 9h1v1h-1zM8 9h1v1h-1zM10 9h1v1h-1zM13 9h1v1h-1zM2 10h1v1h-1zM9 10h1v1h-1zM13 10h1v1h-1zM2 11h1v1h-1zM8 11h1v1h-1zM10 11h1v1h-1zM13 11h1v1h-1zM2 12h1v1h-1zM7 12h1v1h-1zM11 12h1v1h-1zM13 12h1v1h-1zM2 13h1v1h-1zM13 13h1v1h-1zM2 14h12v1h-12z" fill="#aeb7b8"/></svg>
<div class="a" style="left:976px;top:84px;width:24px;height:24px;background:#c9c9c9;box-shadow:inset 0 0 0 2px #838383;"></div>
<svg class="a" style="left:980px;top:88px" width="16" height="16" shape-rendering="crispEdges"><path d="M4 1h10v1h-10zM4 2h1v1h-1zM13 2h1v1h-1zM2 3h3v1h-3zM13 3h1v1h-1zM2 4h1v1h-1zM9 4h2v1h-2zM13 4h1v1h-1zM2 5h1v1h-1zM9 5h2v1h-2zM13 5h1v1h-1zM2 6h1v1h-1zM13 6h1v1h-1zM2 7h1v1h-1zM13 7h1v1h-1zM2 8h1v1h-1zM6 8h1v1h-1zM11 8h1v1h-1zM13 8h1v1h-1zM2 9h2v1h-2zM5 9h1v1h-1zM7 9h1v1h-1zM10 9h1v1h-1zM12 9h2v1h-2zM2 10h1v1h-1zM4 10h1v1h-1zM8 10h2v1h-2zM13 10h1v1h-1zM2 11h1v1h-1zM13 11h1v1h-1zM2 12h1v1h-1zM13 12h1v1h-1zM2 13h1v1h-1zM13 13h1v1h-1zM2 14h12v1h-12z" fill="#686868"/></svg>
<div class="a t" style="left:1020.5px;top:84px;width:50px;height:24px;line-height:24px;color:#aeb7b8;text-align:left;font-size:10px;"><span style="letter-spacing:0.12px;margin-right:-0.12px">Gen Size:</span></div>
<div class="a" style="left:1072px;top:84px;width:24px;height:24px;background:#e6e9e9;box-shadow:inset 0 0 0 2px #b5c1c2;"></div>
<svg class="a" style="left:1080px;top:90px" width="7" height="12" viewBox="0 0 7 12"><path d="M7 0V12L0 6.0z" fill="#aeb7b8"/></svg>
<div class="a" style="left:1098px;top:84px;width:44px;height:24px;background:#e6e9e9;box-shadow:inset 0 0 0 1px #b5c1c2;"></div>
<div class="a t" style="left:1114.5px;top:84px;width:18px;height:24px;line-height:24px;color:#aeb7b8;text-align:left;font-size:10px;"><span style="letter-spacing:-0.70px;margin-right:0.70px">10</span></div>
<div class="a" style="left:1144px;top:84px;width:24px;height:24px;background:#e6e9e9;box-shadow:inset 0 0 0 2px #b5c1c2;"></div>
<svg class="a" style="left:1153px;top:90px" width="7" height="12" viewBox="0 0 7 12"><path d="M0 0V12L7 6.0z" fill="#aeb7b8"/></svg>
<div class="a" style="left:1192px;top:84px;width:24px;height:24px;background:#e6e9e9;box-shadow:inset 0 0 0 2px #b5c1c2;"></div>
<svg class="a" style="left:1196px;top:88px" width="16" height="16" shape-rendering="crispEdges"><path d="M6 2h3v1h-3zM6 3h4v1h-4zM5 4h1v1h-1zM8 4h2v1h-2zM5 5h1v1h-1zM9 5h2v1h-2zM4 6h1v1h-1zM9 6h2v1h-2zM4 7h1v1h-1zM10 7h2v1h-2zM3 8h1v1h-1zM10 8h2v1h-2zM3 9h9v1h-9zM2 10h1v1h-1zM11 10h2v1h-2zM2 11h1v1h-1zM11 11h2v1h-2zM1 12h1v1h-1zM12 12h2v1h-2zM0 13h4v1h-4zM11 13h5v1h-5z" fill="#aeb7b8"/></svg>
<div class="a" style="left:1220px;top:84px;width:24px;height:24px;background:#e6e9e9;box-shadow:inset 0 0 0 2px #b5c1c2;"></div>
<svg class="a" style="left:1224px;top:88px" width="16" height="16" shape-rendering="crispEdges"><path d="M4 1h10v1h-10zM4 2h1v1h-1zM13 2h1v1h-1zM2 3h3v1h-3zM13 3h1v1h-1zM2 4h1v1h-1zM13 4h1v1h-1zM2 5h1v1h-1zM13 5h1v1h-1zM2 6h1v1h-1zM13 6h1v1h-1zM2 7h1v1h-1zM13 7h1v1h-1zM2 8h1v1h-1zM7 8h1v1h-1zM11 8h1v1h-1zM13 8h1v1h-1zM2 9h1v1h-1zM8 9h1v1h-1zM10 9h1v1h-1zM13 9h1v1h-1zM2 10h1v1h-1zM9 10h1v1h-1zM13 10h1v1h-1zM2 11h1v1h-1zM8 11h1v1h-1zM10 11h1v1h-1zM13 11h1v1h-1zM2 12h1v1h-1zM7 12h1v1h-1zM11 12h1v1h-1zM13 12h1v1h-1zM2 13h1v1h-1zM13 13h1v1h-1zM2 14h12v1h-12z" fill="#aeb7b8"/></svg>
<div class="a t" style="left:1258.5px;top:84px;width:50px;height:24px;line-height:24px;color:#aeb7b8;text-align:left;font-size:10px;"><span style="letter-spacing:0.65px;margin-right:-0.65px">Charset:</span></div>
<div class="a" style="left:1312px;top:84px;width:84px;height:24px;background:#e6e9e9;box-shadow:inset 0 0 0 1px #b5c1c2;"></div>
<div class="a t" style="left:1339.5px;top:84px;width:36px;height:24px;line-height:24px;color:#aeb7b8;text-align:left;font-size:10px;"><span style="letter-spacing:0.31px;margin-right:-0.31px">Basic</span></div>
<div class="a" style="left:1398px;top:84px;width:32px;height:24px;background:#e6e9e9;box-shadow:inset 0 0 0 1px #b5c1c2;"></div>
<div class="a t" style="left:1404.5px;top:84px;width:26px;height:24px;line-height:24px;color:#aeb7b8;text-align:left;font-size:10px;"><span style="letter-spacing:0.70px;margin-right:-0.70px">1/2</span></div>
<div class="a t" style="left:1456.5px;top:84px;width:80px;height:24px;line-height:24px;color:#686868;text-align:left;font-size:10px;"><span style="letter-spacing:0.60px;margin-right:-0.60px">Shapes rec:</span></div>
<div class="a" style="left:1538px;top:84px;width:24px;height:24px;background:#c9c9c9;box-shadow:inset 0 0 0 2px #838383;"></div>
<svg class="a" style="left:1542px;top:88px" width="16" height="16" shape-rendering="crispEdges"><path d="M2 2h12v1h-12zM2 3h1v1h-1zM13 3h1v1h-1zM2 4h1v1h-1zM13 4h1v1h-1zM2 5h1v1h-1zM13 5h1v1h-1zM2 6h1v1h-1zM13 6h1v1h-1zM2 7h1v1h-1zM13 7h1v1h-1zM2 8h1v1h-1zM13 8h1v1h-1zM2 9h1v1h-1zM9 9h5v1h-5zM2 10h1v1h-1zM9 10h5v1h-5zM2 11h1v1h-1zM9 11h5v1h-5zM2 12h1v1h-1zM9 12h5v1h-5zM2 13h12v1h-12z" fill="#686868"/></svg>
<div class="a" style="left:1566px;top:84px;width:24px;height:24px;background:#c9c9c9;box-shadow:inset 0 0 0 2px #838383;"></div>
<svg class="a" style="left:1570px;top:88px" width="16" height="16" shape-rendering="crispEdges"><path d="M2 2h12v1h-12zM2 3h1v1h-1zM12 3h2v1h-2zM2 4h1v1h-1zM11 4h1v1h-1zM13 4h1v1h-1zM2 5h1v1h-1zM10 5h1v1h-1zM13 5h1v1h-1zM2 6h1v1h-1zM9 6h1v1h-1zM13 6h1v1h-1zM2 7h1v1h-1zM8 7h1v1h-1zM13 7h1v1h-1zM2 8h1v1h-1zM7 8h1v1h-1zM13 8h1v1h-1zM2 9h1v1h-1zM6 9h1v1h-1zM13 9h1v1h-1zM2 10h1v1h-1zM5 10h1v1h-1zM13 10h1v1h-1zM2 11h1v1h-1zM4 11h1v1h-1zM13 11h1v1h-1zM2 12h2v1h-2zM13 12h1v1h-1zM2 13h12v1h-12z" fill="#686868"/></svg>
<div class="a" style="left:1594px;top:84px;width:24px;height:24px;background:#c9c9c9;box-shadow:inset 0 0 0 1px #838383;"></div>
<svg class="a" style="left:1598px;top:88px" width="16" height="16" shape-rendering="crispEdges"><path d="M2 2h12v1h-12zM2 3h1v1h-1zM13 3h1v1h-1zM2 4h1v1h-1zM13 4h1v1h-1zM2 5h1v1h-1zM13 5h1v1h-1zM2 6h1v1h-1zM13 6h1v1h-1zM2 7h1v1h-1zM13 7h1v1h-1zM2 8h1v1h-1zM13 8h1v1h-1zM2 9h1v1h-1zM13 9h1v1h-1zM2 10h1v1h-1zM13 10h1v1h-1zM2 11h1v1h-1zM13 11h1v1h-1zM2 12h1v1h-1zM13 12h1v1h-1zM2 13h12v1h-12z" fill="#686868"/></svg>
<div class="a" style="left:1206px;top:266px;width:128px;height:128px;background:#000;"></div>
<div class="a" style="left:1206px;top:266px;width:128px;height:128px;overflow:hidden"><div class="g" style="left:5px;top:1px;width:1px">!</div><div class="g" style="left:7px;top:1px;width:4px">&quot;</div><div class="g" style="left:12px;top:1px;width:6px">#</div><div class="g" style="left:19px;top:1px;width:5px">$</div><div class="g" style="left:25px;top:1px;width:7px">%</div><div class="g" style="left:33px;top:1px;width:6px">&amp;</div><div class="g" style="left:40px;top:1px;width:2px">&#x27;</div><div class="g" style="left:43px;top:1px;width:3px">(</div><div class="g" style="left:47px;top:1px;width:3px">)</div><div class="g" style="left:51px;top:1px;width:5px">*</div><div class="g" style="left:57px;top:1px;width:5px">+</div><div class="g" style="left:63px;top:1px;width:2px">,</div><div class="g" style="left:66px;top:1px;width:4px">-</div><div class="g" style="left:71px;top:1px;width:1px">.</div><div class="g" style="left:73px;top:1px;width:7px">/</div><div class="g" style="left:81px;top:1px;width:5px">0</div><div class="g" style="left:87px;top:1px;width:2px">1</div><div class="g" style="left:90px;top:1px;width:5px">2</div><div class="g" style="left:96px;top:1px;width:5px">3</div><div class="g" style="left:102px;top:1px;width:5px">4</div><div class="g" style="left:108px;top:1px;width:5px">5</div><div class="g" style="left:114px;top:1px;width:5px">6</div><div class="g" style="left:120px;top:1px;width:5px">7</div><div class="g" style="left:1px;top:12px;width:5px">8</div><div class="g" style="left:7px;top:12px;width:5px">9</div><div class="g" style="left:13px;top:12px;width:1px">:</div><div class="g" style="left:15px;top:12px;width:1px">;</div><div class="g" style="left:17px;top:12px;width:3px">&lt;</div><div class="g" style="left:21px;top:12px;width:4px">=</div><div class="g" style="left:26px;top:12px;width:3px">&gt;</div><div class="g" style="left:30px;top:12px;width:6px">?</div><div class="g" style="left:37px;top:12px;width:7px">@</div><div class="g" style="left:45px;top:12px;width:6px">A</div><div class="g" style="left:52px;top:12px;width:6px">B</div><div class="g" style="left:59px;top:12px;width:6px">C</div><div class="g" style="left:66px;top:12px;width:6px">D</div><div class="g" style="left:73px;top:12px;width:6px">E</div><div class="g" style="left:80px;top:12px;width:6px">F</div><div class="g" style="left:87px;top:12px;width:6px">G</div><div class="g" style="left:94px;top:12px;width:6px">H</div><div class="g" style="left:101px;top:12px;width:3px">I</div><div class="g" style="left:105px;top:12px;width:5px">J</div><div class="g" style="left:111px;top:12px;width:6px">K</div><div class="g" style="left:118px;top:12px;width:5px">L</div><div class="g" style="left:1px;top:23px;width:7px">M</div><div class="g" style="left:9px;top:23px;width:6px">N</div><div class="g" style="left:16px;top:23px;width:6px">O</div><div class="g" style="left:23px;top:23px;width:6px">P</div><div class="g" style="left:30px;top:23px;width:6px">Q</div><div class="g" style="left:37px;top:23px;width:6px">R</div><div class="g" style="left:44px;top:23px;width:6px">S</div><div class="g" style="left:51px;top:23px;width:7px">T</div><div class="g" style="left:59px;top:23px;width:6px">U</div><div class="g" style="left:66px;top:23px;width:7px">V</div><div class="g" style="left:74px;top:23px;width:7px">W</div><div class="g" style="left:82px;top:23px;width:6px">X</div><div class="g" style="left:89px;top:23px;width:6px">Y</div><div class="g" style="left:96px;top:23px;width:6px">Z</div><div class="g" style="left:103px;top:23px;width:2px">[</div><div class="g" style="left:106px;top:23px;width:7px">\</div><div class="g" style="left:114px;top:23px;width:2px">]</div><div class="g" style="left:117px;top:23px;width:3px">^</div><div class="g" style="left:121px;top:23px;width:5px">_</div><div class="g" style="left:1px;top:34px;width:2px">`</div><div class="g" style="left:4px;top:34px;width:5px">a</div><div class="g" style="left:10px;top:34px;width:5px">b</div><div class="g" style="left:16px;top:34px;width:5px">c</div><div class="g" style="left:22px;top:34px;width:5px">d</div><div class="g" style="left:28px;top:34px;width:5px">e</div><div class="g" style="left:34px;top:34px;width:4px">f</div><div class="g" style="left:39px;top:34px;width:5px">g</div><div class="g" style="left:45px;top:34px;width:5px">h</div><div class="g" style="left:53px;top:34px;width:2px">j</div><div class="g" style="left:56px;top:34px;width:5px">k</div><div class="g" style="left:62px;top:34px;width:2px">l</div><div class="g" style="left:65px;top:34px;width:5px">m</div><div class="g" style="left:71px;top:34px;width:5px">n</div><div class="g" style="left:77px;top:34px;width:5px">o</div><div class="g" style="left:83px;top:34px;width:5px">p</div><div class="g" style="left:89px;top:34px;width:5px">q</div><div class="g" style="left:95px;top:34px;width:5px">r</div><div class="g" style="left:101px;top:34px;width:5px">s</div><div class="g" style="left:107px;top:34px;width:4px">t</div><div class="g" style="left:112px;top:34px;width:5px">u</div><div class="g" style="left:118px;top:34px;width:5px">v</div><div class="g" style="left:1px;top:45px;width:5px">w</div><div class="g" style="left:7px;top:45px;width:5px">x</div><div class="g" style="left:13px;top:45px;width:5px">y</div><div class="g" style="left:19px;top:45px;width:5px">z</div><div class="g" style="left:25px;top:45px;width:3px">{</div><div class="g" style="left:29px;top:45px;width:1px">|</div><div class="g" style="left:31px;top:45px;width:3px">}</div><div class="g" style="left:35px;top:45px;width:4px">~</div><div class="g" style="left:111px;top:45px;width:1px">¡</div><div class="g" style="left:113px;top:45px;width:5px">¢</div><div class="g" style="left:119px;top:45px;width:5px">£</div><div class="g" style="left:1px;top:56px;width:5px">¤</div><div class="g" style="left:7px;top:56px;width:7px">¥</div><div class="g" style="left:15px;top:56px;width:1px">¦</div><div class="g" style="left:17px;top:56px;width:5px">§</div><div class="g" style="left:23px;top:56px;width:3px">¨</div><div class="g" style="left:27px;top:56px;width:7px">©</div><div class="g" style="left:35px;top:56px;width:3px">ª</div><div class="g" style="left:39px;top:56px;width:5px">«</div><div class="g" style="left:45px;top:56px;width:4px">¬</div><div class="g" style="left:52px;top:56px;width:7px">®</div><div class="g" style="left:60px;top:56px;width:4px">¯</div><div class="g" style="left:65px;top:56px;width:3px">°</div><div class="g" style="left:69px;top:56px;width:5px">±</div><div class="g" style="left:75px;top:56px;width:3px">²</div><div class="g" style="left:79px;top:56px;width:3px">³</div><div class="g" style="left:83px;top:56px;width:2px">´</div><div class="g" style="left:86px;top:56px;width:5px">µ</div><div class="g" style="left:92px;top:56px;width:6px">¶</div><div class="g" style="left:101px;top:56px;width:2px">¸</div><div class="g" style="left:104px;top:56px;width:2px">¹</div><div class="g" style="left:107px;top:56px;width:3px">º</div><div class="g" style="left:111px;top:56px;width:5px">»</div><div class="g" style="left:117px;top:56px;width:6px">¼</div><div class="g" style="left:1px;top:67px;width:6px">½</div><div class="g" style="left:8px;top:67px;width:6px">¾</div><div class="g" style="left:15px;top:67px;width:6px">¿</div><div class="g" style="left:22px;top:67px;width:6px">À</div><div class="g" style="left:29px;top:67px;width:6px">Á</div><div class="g" style="left:36px;top:67px;width:6px">Â</div><div class="g" style="left:43px;top:67px;width:6px">Ã</div><div class="g" style="left:50px;top:67px;width:6px">Ä</div><div class="g" style="left:57px;top:67px;width:6px">Å</div><div class="g" style="left:64px;top:67px;width:7px">Æ</div><div class="g" style="left:72px;top:67px;width:6px">Ç</div><div class="g" style="left:79px;top:67px;width:6px">È</div><div class="g" style="left:86px;top:67px;width:6px">É</div><div class="g" style="left:93px;top:67px;width:6px">Ê</div><div class="g" style="left:100px;top:67px;width:6px">Ë</div><div class="g" style="left:107px;top:67px;width:3px">Ì</div><div class="g" style="left:111px;top:67px;width:3px">Í</div><div class="g" style="left:115px;top:67px;width:3px">Î</div><div class="g" style="left:119px;top:67px;width:3px">Ï</div><div class="g" style="left:1px;top:78px;width:7px">Ð</div><div class="g" style="left:9px;top:78px;width:6px">Ñ</div><div class="g" style="left:16px;top:78px;width:6px">Ò</div><div class="g" style="left:23px;top:78px;width:6px">Ó</div><div class="g" style="left:30px;top:78px;width:6px">Ô</div><div class="g" style="left:37px;top:78px;width:6px">Õ</div><div class="g" style="left:44px;top:78px;width:6px">Ö</div><div class="g" style="left:51px;top:78px;width:5px">×</div><div class="g" style="left:57px;top:78px;width:6px">Ø</div><div class="g" style="left:64px;top:78px;width:6px">Ù</div><div class="g" style="left:71px;top:78px;width:6px">Ú</div><div class="g" style="left:78px;top:78px;width:6px">Û</div><div class="g" style="left:85px;top:78px;width:6px">Ü</div><div class="g" style="left:92px;top:78px;width:6px">Ý</div><div class="g" style="left:99px;top:78px;width:4px">Þ</div><div class="g" style="left:104px;top:78px;width:6px">ß</div><div class="g" style="left:111px;top:78px;width:5px">à</div><div class="g" style="left:117px;top:78px;width:5px">á</div><div class="g" style="left:1px;top:89px;width:5px">â</div><div class="g" style="left:7px;top:89px;width:5px">ã</div><div class="g" style="left:13px;top:89px;width:5px">ä</div><div class="g" style="left:19px;top:89px;width:5px">å</div><div class="g" style="left:25px;top:89px;width:9px">æ</div><div class="g" style="left:35px;top:89px;width:5px">ç</div><div class="g" style="left:41px;top:89px;width:5px">è</div><div class="g" style="left:47px;top:89px;width:5px">é</div><div class="g" style="left:53px;top:89px;width:5px">ê</div><div class="g" style="left:59px;top:89px;width:5px">ë</div><div class="g" style="left:65px;top:89px;width:2px">ì</div><div class="g" style="left:68px;top:89px;width:2px">í</div><div class="g" style="left:71px;top:89px;width:3px">î</div><div class="g" style="left:75px;top:89px;width:3px">ï</div><div class="g" style="left:79px;top:89px;width:5px">ð</div><div class="g" style="left:85px;top:89px;width:5px">ñ</div><div class="g" style="left:91px;top:89px;width:5px">ò</div><div class="g" style="left:97px;top:89px;width:5px">ó</div><div class="g" style="left:103px;top:89px;width:5px">ô</div><div class="g" style="left:109px;top:89px;width:5px">õ</div><div class="g" style="left:115px;top:89px;width:5px">ö</div><div class="g" style="left:121px;top:89px;width:5px">÷</div><div class="g" style="left:1px;top:100px;width:5px">ø</div><div class="g" style="left:7px;top:100px;width:5px">ù</div><div class="g" style="left:13px;top:100px;width:5px">ú</div><div class="g" style="left:19px;top:100px;width:5px">û</div><div class="g" style="left:25px;top:100px;width:5px">ü</div><div class="g" style="left:31px;top:100px;width:5px">ý</div><div class="g" style="left:37px;top:100px;width:5px">þ</div><div class="g" style="left:43px;top:100px;width:5px">ÿ</div></div>
<div class="a" style="left:1247px;top:312px;width:2px;height:8px;background:#5bb2d9;"></div>
<div class="a" style="left:1206px;top:266px;width:128px;height:128px;box-shadow:inset 0 0 0 1px #8a1c20;"></div>
<div class="a" style="left:908px;top:520px;width:724px;height:1px;background:#90abb5"></div>
<div class="a" style="left:918px;top:540px;width:1px;height:56px;background:#90abb5"></div>
<div class="a" style="left:918px;top:595px;width:704px;height:1px;background:#90abb5"></div>
<div class="a" style="left:1621px;top:540px;width:1px;height:56px;background:#90abb5"></div>
<div class="a" style="left:918px;top:540px;width:8px;height:1px;background:#90abb5"></div>
<div class="a t" style="left:929.5px;top:534px;width:113px;height:12px;line-height:12px;color:#6c9bbc;text-align:left;font-size:10px;"><span style="letter-spacing:0.70px;margin-right:-0.70px">Text Drawing Options</span></div>
<div class="a" style="left:1046px;top:540px;width:576px;height:1px;background:#90abb5"></div>
<div class="a t" style="left:939.5px;top:556px;width:56px;height:24px;line-height:24px;color:#686868;text-align:left;font-size:10px;"><span style="letter-spacing:0.50px;margin-right:-0.50px">Font Size:</span></div>
<div class="a" style="left:996px;top:556px;width:24px;height:24px;background:#c9c9c9;box-shadow:inset 0 0 0 2px #838383;"></div>
<svg class="a" style="left:1004px;top:562px" width="7" height="12" viewBox="0 0 7 12"><path d="M7 0V12L0 6.0z" fill="#686868"/></svg>
<div class="a" style="left:1022px;top:556px;width:48px;height:24px;box-shadow:inset 0 0 0 1px #838383;"></div>
<div class="a t" style="left:1040.5px;top:556px;width:18px;height:24px;line-height:24px;color:#686868;text-align:left;font-size:10px;"><span style="letter-spacing:-0.70px;margin-right:0.70px">10</span></div>
<div class="a" style="left:1072px;top:556px;width:24px;height:24px;background:#c9c9c9;box-shadow:inset 0 0 0 2px #838383;"></div>
<svg class="a" style="left:1081px;top:562px" width="7" height="12" viewBox="0 0 7 12"><path d="M0 0V12L7 6.0z" fill="#686868"/></svg>
<div class="a t" style="left:1116.5px;top:556px;width:45px;height:24px;line-height:24px;color:#686868;text-align:left;font-size:10px;"><span style="letter-spacing:0.13px;margin-right:-0.13px">Spacing:</span></div>
<div class="a" style="left:1162px;top:556px;width:24px;height:24px;background:#c9c9c9;box-shadow:inset 0 0 0 2px #838383;"></div>
<svg class="a" style="left:1170px;top:562px" width="7" height="12" viewBox="0 0 7 12"><path d="M7 0V12L0 6.0z" fill="#686868"/></svg>
<div class="a" style="left:1188px;top:556px;width:48px;height:24px;box-shadow:inset 0 0 0 1px #838383;"></div>
<div class="a t" style="left:1209.5px;top:556px;width:12px;height:24px;line-height:24px;color:#686868;text-align:left;font-size:10px;"><span style="letter-spacing:-0.70px;margin-right:0.70px">1</span></div>
<div class="a" style="left:1238px;top:556px;width:24px;height:24px;background:#c9c9c9;box-shadow:inset 0 0 0 2px #838383;"></div>
<svg class="a" style="left:1247px;top:562px" width="7" height="12" viewBox="0 0 7 12"><path d="M0 0V12L7 6.0z" fill="#686868"/></svg>
<div class="a" style="left:1276px;top:554px;width:336px;height:28px;box-shadow:inset 0 0 0 1px #838383;"></div>
<div class="a t" style="left:1280.5px;top:554px;width:200px;height:28px;line-height:28px;color:#686868;text-align:left;font-size:10px;"><span style="letter-spacing:0.62px;margin-right:-0.62px">sample text</span></div>
<div class="a" style="left:1640px;top:52px;width:160px;height:556px;box-shadow:inset 0 0 0 1px #838383;"></div>
<div class="a" style="left:1640px;top:52px;width:160px;height:24px;background:#c9c9c9;box-shadow:inset 0 0 0 1px #838383;"></div>
<svg class="a" style="left:1649px;top:56px" width="16" height="16" shape-rendering="crispEdges"><path d="M6 2h3v1h-3zM6 3h4v1h-4zM5 4h1v1h-1zM8 4h2v1h-2zM5 5h1v1h-1zM9 5h2v1h-2zM4 6h1v1h-1zM9 6h2v1h-2zM4 7h1v1h-1zM10 7h2v1h-2zM3 8h1v1h-1zM10 8h2v1h-2zM3 9h9v1h-9zM2 10h1v1h-1zM11 10h2v1h-2zM2 11h1v1h-1zM11 11h2v1h-2zM1 12h1v1h-1zM12 12h2v1h-2zM0 13h4v1h-4zM11 13h5v1h-5z" fill="#686868"/></svg>
<div class="a t" style="left:1668.5px;top:52px;width:60px;height:24px;line-height:24px;color:#686868;text-align:left;font-size:10px;"><span style="letter-spacing:0.75px;margin-right:-0.75px">Font</span></div>
<div class="a" style="left:1643px;top:78px;width:154px;height:28px;box-shadow:inset 0 0 0 1px #9fd3ea;"></div>
<div class="a t" style="left:1700.5px;top:78px;width:46px;height:28px;line-height:28px;color:#686868;text-align:left;font-size:10px;"><span style="letter-spacing:0.85px;margin-right:-0.85px">default</span></div>
<div class="a t" style="left:1694.5px;top:108px;width:59px;height:28px;line-height:28px;color:#686868;text-align:left;font-size:10px;"><span style="letter-spacing:0.87px;margin-right:-0.87px">Cartridge</span></div>
<div class="a t" style="left:1691.5px;top:138px;width:65px;height:28px;line-height:28px;color:#686868;text-align:left;font-size:10px;"><span style="letter-spacing:0.60px;margin-right:-0.60px">hello-world</span></div>
<div class="a t" style="left:1695.5px;top:168px;width:57px;height:28px;line-height:28px;color:#686868;text-align:left;font-size:10px;"><span style="letter-spacing:0.04px;margin-right:-0.04px">homespun</span></div>
<div class="a t" style="left:1689.5px;top:198px;width:68px;height:28px;line-height:28px;color:#686868;text-align:left;font-size:10px;"><span style="letter-spacing:0.35px;margin-right:-0.35px">Kyrou7Wide</span></div>
<div class="a t" style="left:1703.5px;top:228px;width:41px;height:28px;line-height:28px;color:#686868;text-align:left;font-size:10px;"><span style="letter-spacing:0.20px;margin-right:-0.20px">Mecha</span></div>
<div class="a t" style="left:1696.5px;top:258px;width:54px;height:28px;line-height:28px;color:#686868;text-align:left;font-size:10px;"><span style="letter-spacing:0.69px;margin-right:-0.69px">PixelIntv</span></div>
<div class="a t" style="left:1683.5px;top:288px;width:81px;height:28px;line-height:28px;color:#686868;text-align:left;font-size:10px;"><span style="letter-spacing:0.76px;margin-right:-0.76px">PixelOperator</span></div>
<div class="a t" style="left:1695.5px;top:318px;width:57px;height:28px;line-height:28px;color:#686868;text-align:left;font-size:10px;"><span style="letter-spacing:0.94px;margin-right:-0.94px">vSeaster</span></div>
<div class="a t" style="left:1696.5px;top:348px;width:54px;height:28px;line-height:28px;color:#686868;text-align:left;font-size:10px;"><span style="letter-spacing:0.50px;margin-right:-0.50px">vSloxical</span></div>
<div class="a t" style="left:1691.5px;top:378px;width:65px;height:28px;line-height:28px;color:#686868;text-align:left;font-size:10px;"><span style="letter-spacing:0.52px;margin-right:-0.52px">Westington</span></div>
<div class="a t" style="left:1707.5px;top:408px;width:33px;height:28px;line-height:28px;color:#686868;text-align:left;font-size:10px;"><span style="letter-spacing:0.19px;margin-right:-0.19px">2a03</span></div>
<div class="a t" style="left:1704.5px;top:438px;width:38px;height:28px;line-height:28px;color:#686868;text-align:left;font-size:10px;"><span style="letter-spacing:-0.50px;margin-right:0.50px">GMSN</span></div>
<div class="a t" style="left:1680.5px;top:468px;width:87px;height:28px;line-height:28px;color:#686868;text-align:left;font-size:10px;"><span style="letter-spacing:1.09px;margin-right:-1.09px">CozetteVector</span></div>
<div class="a t" style="left:1700.5px;top:498px;width:47px;height:28px;line-height:28px;color:#686868;text-align:left;font-size:10px;"><span style="letter-spacing:0.92px;margin-right:-0.92px">Fairfax</span></div>
<div class="a t" style="left:1691.5px;top:528px;width:65px;height:28px;line-height:28px;color:#686868;text-align:left;font-size:10px;"><span style="letter-spacing:0.31px;margin-right:-0.31px">OwreKynge</span></div>
<div class="a" style="left:111px;top:636px;width:1701px;height:1px;background:#90abb5"></div>
<div class="a" style="left:111px;top:636px;width:1px;height:177px;background:#90abb5"></div>
<div class="a" style="left:226px;top:636px;width:1px;height:177px;background:#90abb5"></div>
<div class="a" style="left:341px;top:636px;width:1px;height:177px;background:#90abb5"></div>
<div class="a" style="left:456px;top:636px;width:1px;height:177px;background:#90abb5"></div>
<div class="a" style="left:671px;top:636px;width:1px;height:177px;background:#90abb5"></div>
<div class="a" style="left:786px;top:636px;width:1px;height:177px;background:#90abb5"></div>
<div class="a" style="left:901px;top:636px;width:1px;height:177px;background:#90abb5"></div>
<div class="a" style="left:1016px;top:636px;width:1px;height:177px;background:#90abb5"></div>
<div class="a" style="left:1231px;top:636px;width:1px;height:177px;background:#90abb5"></div>
<div class="a" style="left:1386px;top:636px;width:1px;height:177px;background:#90abb5"></div>
<div class="a" style="left:1561px;top:636px;width:1px;height:177px;background:#90abb5"></div>
<div class="a" style="left:1676px;top:636px;width:1px;height:177px;background:#90abb5"></div>
<div class="a" style="left:1791px;top:636px;width:1px;height:177px;background:#90abb5"></div>
<div class="a" style="left:12px;top:656px;width:1800px;height:1px;background:#90abb5"></div>
<div class="a" style="left:12px;top:695px;width:1800px;height:1px;background:#90abb5"></div>
<div class="a" style="left:12px;top:734px;width:1800px;height:1px;background:#90abb5"></div>
<div class="a" style="left:12px;top:773px;width:1800px;height:1px;background:#90abb5"></div>
<div class="a" style="left:12px;top:812px;width:1800px;height:1px;background:#90abb5"></div>
<div class="a" style="left:12px;top:656px;width:1px;height:157px;background:#90abb5"></div>
<div class="a" style="left:564px;top:656px;width:1px;height:157px;background:#90abb5"></div>
<div class="a" style="left:1124px;top:656px;width:1px;height:157px;background:#90abb5"></div>
<div class="a t" style="left:151.5px;top:637px;width:42px;height:19px;line-height:19px;color:#686868;text-align:left;font-size:10px;"><span style="letter-spacing:0.17px;margin-right:-0.17px">LABEL</span></div>
<div class="a t" style="left:260.5px;top:637px;width:53px;height:19px;line-height:19px;color:#686868;text-align:left;font-size:10px;"><span style="letter-spacing:0.34px;margin-right:-0.34px">BUTTON</span></div>
<div class="a t" style="left:376.5px;top:637px;width:51px;height:19px;line-height:19px;color:#686868;text-align:left;font-size:10px;"><span style="letter-spacing:-0.08px;margin-right:0.08px">TOGGLE</span></div>
<div class="a t" style="left:534.5px;top:637px;width:65px;height:19px;line-height:19px;color:#686868;text-align:left;font-size:10px;"><span style="letter-spacing:-0.14px;margin-right:0.14px">CHECKBOX</span></div>
<div class="a t" style="left:708.5px;top:637px;width:47px;height:19px;line-height:19px;color:#686868;text-align:left;font-size:10px;"><span style="letter-spacing:0.15px;margin-right:-0.15px">SLIDER</span></div>
<div class="a t" style="left:813.5px;top:637px;width:68px;height:19px;line-height:19px;color:#686868;text-align:left;font-size:10px;"><span style="letter-spacing:0.15px;margin-right:-0.15px">SLIDERBAR</span></div>
<div class="a t" style="left:919.5px;top:637px;width:86px;height:19px;line-height:19px;color:#686868;text-align:left;font-size:10px;"><span style="letter-spacing:-0.11px;margin-right:0.11px">PROGRESSBAR</span></div>
<div class="a t" style="left:1082.5px;top:637px;width:89px;height:19px;line-height:19px;color:#686868;text-align:left;font-size:10px;"><span style="letter-spacing:0.11px;margin-right:-0.11px">TOGGLESLIDER</span></div>
<div class="a t" style="left:1279.5px;top:637px;width:66px;height:19px;line-height:19px;color:#686868;text-align:left;font-size:10px;"><span style="letter-spacing:-0.36px;margin-right:0.36px">COMBOBOX</span></div>
<div class="a t" style="left:1433.5px;top:637px;width:87px;height:19px;line-height:19px;color:#686868;text-align:left;font-size:10px;"><span style="letter-spacing:-0.42px;margin-right:0.42px">DROPDOWNBOX</span></div>
<div class="a t" style="left:1592.5px;top:637px;width:60px;height:19px;line-height:19px;color:#686868;text-align:left;font-size:10px;"><span style="letter-spacing:0.47px;margin-right:-0.47px">TEXTBOX</span></div>
<div class="a t" style="left:1704.5px;top:637px;width:65px;height:19px;line-height:19px;color:#686868;text-align:left;font-size:10px;"><span style="letter-spacing:0.23px;margin-right:-0.23px">VALUEBOX</span></div>
<div class="a" style="left:12px;top:642px;width:8px;height:8px;background:#838383;"></div>
<div class="a" style="left:20px;top:642px;width:8px;height:8px;background:#c9c9c9;"></div>
<div class="a" style="left:28px;top:642px;width:8px;height:8px;background:#686868;"></div>
<div class="a" style="left:36px;top:642px;width:8px;height:8px;background:#5bb2d9;"></div>
<div class="a" style="left:44px;top:642px;width:8px;height:8px;background:#c9effe;"></div>
<div class="a" style="left:52px;top:642px;width:8px;height:8px;background:#6c9bbc;"></div>
<div class="a" style="left:60px;top:642px;width:8px;height:8px;background:#0492c7;"></div>
<div class="a" style="left:68px;top:642px;width:8px;height:8px;background:#97e8ff;"></div>
<div class="a" style="left:76px;top:642px;width:8px;height:8px;background:#368baf;"></div>
<div class="a" style="left:84px;top:642px;width:8px;height:8px;background:#b5c1c2;"></div>
<div class="a" style="left:92px;top:642px;width:8px;height:8px;background:#e6e9e9;"></div>
<div class="a" style="left:100px;top:642px;width:8px;height:8px;background:#aeb7b8;"></div>
<div class="a t" style="left:39.5px;top:657px;width:70px;height:38px;line-height:38px;color:#686868;text-align:left;font-size:10px;"><span style="letter-spacing:-0.30px;margin-right:0.30px">NORMAL</span></div>
<svg class="a" style="left:138px;top:668px" width="16" height="16" shape-rendering="crispEdges"><path d="M4 1h10v1h-10zM4 2h1v1h-1zM13 2h1v1h-1zM2 3h3v1h-3zM13 3h1v1h-1zM2 4h1v1h-1zM13 4h1v1h-1zM2 5h1v1h-1zM13 5h1v1h-1zM2 6h1v1h-1zM4 6h8v1h-8zM13 6h1v1h-1zM2 7h1v1h-1zM13 7h1v1h-1zM2 8h1v1h-1zM4 8h8v1h-8zM13 8h1v1h-1zM2 9h1v1h-1zM13 9h1v1h-1zM2 10h1v1h-1zM4 10h8v1h-8zM13 10h1v1h-1zM2 11h1v1h-1zM13 11h1v1h-1zM2 12h1v1h-1zM13 12h1v1h-1zM2 13h1v1h-1zM13 13h1v1h-1zM2 14h12v1h-12z" fill="#686868"/></svg>
<div class="a t" style="left:157.5px;top:664px;width:40px;height:24px;line-height:24px;color:#686868;text-align:left;font-size:10px;"><span style="letter-spacing:0.31px;margin-right:-0.31px">Label</span></div>
<div class="a" style="left:234px;top:664px;width:100px;height:24px;background:#c9c9c9;box-shadow:inset 0 0 0 2px #838383;"></div>
<svg class="a" style="left:257px;top:668px" width="16" height="16" shape-rendering="crispEdges"><path d="M1 1h13v1h-13zM1 2h1v1h-1zM5 2h1v1h-1zM9 2h1v1h-1zM14 2h1v1h-1zM1 3h1v1h-1zM5 3h5v1h-5zM14 3h1v1h-1zM1 4h1v1h-1zM14 4h1v1h-1zM1 5h1v1h-1zM14 5h1v1h-1zM1 6h1v1h-1zM14 6h1v1h-1zM1 7h1v1h-1zM3 7h10v1h-10zM14 7h1v1h-1zM1 8h1v1h-1zM3 8h1v1h-1zM12 8h1v1h-1zM14 8h1v1h-1zM1 9h1v1h-1zM3 9h1v1h-1zM5 9h6v1h-6zM12 9h1v1h-1zM14 9h1v1h-1zM1 10h1v1h-1zM3 10h1v1h-1zM12 10h1v1h-1zM14 10h1v1h-1zM1 11h1v1h-1zM3 11h1v1h-1zM12 11h1v1h-1zM14 11h1v1h-1zM1 12h1v1h-1zM3 12h10v1h-10zM14 12h1v1h-1zM1 13h1v1h-1zM14 13h1v1h-1zM1 14h14v1h-14z" fill="#686868"/></svg>
<div class="a t" style="left:276.5px;top:664px;width:38px;height:24px;line-height:24px;color:#686868;text-align:left;font-size:10px;"><span style="letter-spacing:0.85px;margin-right:-0.85px">Button</span></div>
<div class="a" style="left:349px;top:664px;width:100px;height:24px;background:#c9c9c9;box-shadow:inset 0 0 0 1px #838383;"></div>
<svg class="a" style="left:372px;top:668px" width="16" height="16" shape-rendering="crispEdges"><path d="M7 2h1v1h-1zM9 2h1v1h-1zM7 3h1v1h-1zM9 3h1v1h-1zM6 4h2v1h-2zM9 4h2v1h-2zM6 5h2v1h-2zM9 5h2v1h-2zM5 6h1v1h-1zM7 6h1v1h-1zM9 6h3v1h-3zM5 7h1v1h-1zM7 7h1v1h-1zM9 7h3v1h-3zM4 8h1v1h-1zM7 8h1v1h-1zM9 8h4v1h-4zM4 9h1v1h-1zM7 9h1v1h-1zM9 9h4v1h-4zM3 10h1v1h-1zM7 10h1v1h-1zM9 10h5v1h-5zM3 11h1v1h-1zM7 11h1v1h-1zM9 11h5v1h-5zM2 12h6v1h-6zM9 12h6v1h-6zM2 13h6v1h-6zM9 13h6v1h-6z" fill="#686868"/></svg>
<div class="a t" style="left:391.5px;top:664px;width:38px;height:24px;line-height:24px;color:#686868;text-align:left;font-size:10px;"><span style="letter-spacing:0.76px;margin-right:-0.76px">Toggle</span></div>
<div class="a" style="left:466px;top:669px;width:15px;height:15px;box-shadow:inset 0 0 0 1px #838383;"></div>
<div class="a t" style="left:484.5px;top:657px;width:70px;height:38px;line-height:38px;color:#686868;text-align:left;font-size:10px;"><span style="letter-spacing:0.27px;margin-right:-0.27px">NoCheck</span></div>
<div class="a" style="left:574px;top:669px;width:15px;height:15px;box-shadow:inset 0 0 0 1px #838383;"></div>
<div class="a" style="left:576px;top:671px;width:11px;height:11px;background:#686868;"></div>
<div class="a t" style="left:592.5px;top:657px;width:70px;height:38px;line-height:38px;color:#686868;text-align:left;font-size:10px;"><span style="letter-spacing:0.36px;margin-right:-0.36px">Checked</span></div>
<div class="a" style="left:679px;top:671px;width:100px;height:10px;background:#c9c9c9;box-shadow:inset 0 0 0 1px #838383;"></div>
<div class="a" style="left:714px;top:673px;width:10px;height:6px;background:#97e8ff;"></div>
<div class="a" style="left:794px;top:671px;width:100px;height:10px;background:#c9c9c9;box-shadow:inset 0 0 0 1px #838383;"></div>
<div class="a" style="left:795px;top:673px;width:40px;height:6px;background:#97e8ff;"></div>
<div class="a" style="left:909px;top:671px;width:100px;height:10px;box-shadow:inset 0 0 0 1px #838383;"></div>
<div class="a" style="left:909px;top:671px;width:60px;height:10px;background:#97e8ff;box-shadow:inset 0 0 0 1px #5bb2d9;"></div>
<div class="a" style="left:910px;top:672px;width:58px;height:8px;background:#97e8ff;"></div>
<div class="a" style="left:1024px;top:664px;width:92px;height:24px;background:#c9c9c9;box-shadow:inset 0 0 0 1px #838383;"></div>
<div class="a" style="left:1132px;top:664px;width:92px;height:24px;background:#c9c9c9;box-shadow:inset 0 0 0 1px #0492c7;"></div>
<div class="a" style="left:1027px;top:667px;width:42px;height:18px;background:#97e8ff;"></div>
<div class="a" style="left:1179px;top:667px;width:42px;height:18px;background:#97e8ff;"></div>
<svg class="a" style="left:1028px;top:668px" width="16" height="16" shape-rendering="crispEdges"><path d="M2 2h12v1h-12zM2 3h1v1h-1zM13 3h1v1h-1zM2 4h1v1h-1zM13 4h1v1h-1zM2 5h1v1h-1zM13 5h1v1h-1zM2 6h4v1h-4zM13 6h1v1h-1zM2 7h4v1h-4zM13 7h1v1h-1zM2 8h4v1h-4zM13 8h1v1h-1zM2 9h4v1h-4zM13 9h1v1h-1zM2 10h1v1h-1zM13 10h1v1h-1zM2 11h1v1h-1zM13 11h1v1h-1zM2 12h1v1h-1zM13 12h1v1h-1zM2 13h12v1h-12z" fill="#686868"/></svg>
<div class="a t" style="left:1047.5px;top:664px;width:24px;height:24px;line-height:24px;color:#686868;text-align:left;font-size:10px;"><span style="letter-spacing:0.00px;margin-right:-0.00px">OFF</span></div>
<svg class="a" style="left:1183px;top:668px" width="16" height="16" shape-rendering="crispEdges"><path d="M2 2h12v1h-12zM2 3h1v1h-1zM13 3h1v1h-1zM2 4h1v1h-1zM13 4h1v1h-1zM2 5h1v1h-1zM13 5h1v1h-1zM2 6h1v1h-1zM10 6h4v1h-4zM2 7h1v1h-1zM10 7h4v1h-4zM2 8h1v1h-1zM10 8h4v1h-4zM2 9h1v1h-1zM10 9h4v1h-4zM2 10h1v1h-1zM13 10h1v1h-1zM2 11h1v1h-1zM13 11h1v1h-1zM2 12h1v1h-1zM13 12h1v1h-1zM2 13h12v1h-12z" fill="#686868"/></svg>
<div class="a t" style="left:1202.5px;top:664px;width:17px;height:24px;line-height:24px;color:#686868;text-align:left;font-size:10px;"><span style="letter-spacing:-0.70px;margin-right:0.70px">ON</span></div>
<div class="a" style="left:1239px;top:664px;width:106px;height:24px;background:#c9c9c9;box-shadow:inset 0 0 0 1px #838383;"></div>
<div class="a" style="left:1347px;top:664px;width:32px;height:24px;background:#c9c9c9;box-shadow:inset 0 0 0 1px #838383;"></div>
<svg class="a" style="left:1257px;top:668px" width="16" height="16" shape-rendering="crispEdges"><path d="M8 1h1v1h-1zM8 2h1v1h-1zM5 3h2v1h-2zM8 3h1v1h-1zM10 3h1v1h-1zM4 4h1v1h-1zM6 4h1v1h-1zM8 4h1v1h-1zM10 4h2v1h-2zM3 5h1v1h-1zM6 5h1v1h-1zM8 5h1v1h-1zM10 5h3v1h-3zM2 6h1v1h-1zM6 6h1v1h-1zM8 6h1v1h-1zM10 6h4v1h-4zM1 7h1v1h-1zM6 7h1v1h-1zM8 7h1v1h-1zM10 7h5v1h-5zM1 8h1v1h-1zM6 8h1v1h-1zM8 8h1v1h-1zM10 8h5v1h-5zM2 9h1v1h-1zM6 9h1v1h-1zM8 9h1v1h-1zM10 9h4v1h-4zM3 10h1v1h-1zM6 10h1v1h-1zM8 10h1v1h-1zM10 10h3v1h-3zM4 11h1v1h-1zM6 11h1v1h-1zM8 11h1v1h-1zM10 11h2v1h-2zM5 12h2v1h-2zM8 12h1v1h-1zM10 12h1v1h-1zM8 13h1v1h-1zM8 14h1v1h-1z" fill="#686868"/></svg>
<div class="a t" style="left:1276.5px;top:664px;width:53px;height:24px;line-height:24px;color:#686868;text-align:left;font-size:10px;"><span style="letter-spacing:-0.06px;margin-right:0.06px">ComboBox</span></div>
<div class="a t" style="left:1353.5px;top:664px;width:26px;height:24px;line-height:24px;color:#686868;text-align:left;font-size:10px;"><span style="letter-spacing:0.70px;margin-right:-0.70px">1/2</span></div>
<div class="a" style="left:1394px;top:664px;width:160px;height:24px;background:#c9c9c9;box-shadow:inset 0 0 0 1px #838383;"></div>
<svg class="a" style="left:1430px;top:668px" width="16" height="16" shape-rendering="crispEdges"><path d="M7 1h2v1h-2zM6 2h1v1h-1zM9 2h1v1h-1zM5 3h1v1h-1zM10 3h1v1h-1zM4 4h1v1h-1zM11 4h1v1h-1zM3 5h10v1h-10zM1 8h14v1h-14zM3 10h10v1h-10zM4 11h8v1h-8zM5 12h6v1h-6zM6 13h4v1h-4zM7 14h2v1h-2z" fill="#686868"/></svg>
<div class="a t" style="left:1449.5px;top:664px;width:71px;height:24px;line-height:24px;color:#686868;text-align:left;font-size:10px;"><span style="letter-spacing:0.38px;margin-right:-0.38px">DropdownBox</span></div>
<svg class="a" style="left:1537px;top:673px" width="12" height="6" viewBox="0 0 12 6"><path d="M0 0H12L6.0 6z" fill="#686868"/></svg>
<div class="a" style="left:1569px;top:664px;width:100px;height:24px;box-shadow:inset 0 0 0 1px #838383;"></div>
<div class="a t" style="left:1572.5px;top:664px;width:90px;height:24px;line-height:24px;color:#686868;text-align:left;font-size:10px;"><span style="letter-spacing:1.00px;margin-right:-1.00px">text box</span></div>
<div class="a" style="left:1684px;top:664px;width:100px;height:24px;box-shadow:inset 0 0 0 1px #838383;"></div>
<div class="a t" style="left:1727.5px;top:664px;width:21px;height:24px;line-height:24px;color:#686868;text-align:left;font-size:10px;"><span style="letter-spacing:-0.06px;margin-right:0.06px">40</span></div>
<div class="a" style="left:1799px;top:664px;width:24px;height:24px;background:#c9c9c9;box-shadow:inset 0 0 0 2px #838383;"></div>
<svg class="a" style="left:1807px;top:670px" width="7" height="12" viewBox="0 0 7 12"><path d="M7 0V12L0 6.0z" fill="#686868"/></svg>
<div class="a t" style="left:39.5px;top:696px;width:70px;height:38px;line-height:38px;color:#6c9bbc;text-align:left;font-size:10px;"><span style="letter-spacing:-0.13px;margin-right:0.13px">FOCUSED</span></div>
<svg class="a" style="left:138px;top:707px" width="16" height="16" shape-rendering="crispEdges"><path d="M4 1h10v1h-10zM4 2h1v1h-1zM13 2h1v1h-1zM2 3h3v1h-3zM13 3h1v1h-1zM2 4h1v1h-1zM13 4h1v1h-1zM2 5h1v1h-1zM13 5h1v1h-1zM2 6h1v1h-1zM4 6h8v1h-8zM13 6h1v1h-1zM2 7h1v1h-1zM13 7h1v1h-1zM2 8h1v1h-1zM4 8h8v1h-8zM13 8h1v1h-1zM2 9h1v1h-1zM13 9h1v1h-1zM2 10h1v1h-1zM4 10h8v1h-8zM13 10h1v1h-1zM2 11h1v1h-1zM13 11h1v1h-1zM2 12h1v1h-1zM13 12h1v1h-1zM2 13h1v1h-1zM13 13h1v1h-1zM2 14h12v1h-12z" fill="#6c9bbc"/></svg>
<div class="a t" style="left:157.5px;top:703px;width:40px;height:24px;line-height:24px;color:#6c9bbc;text-align:left;font-size:10px;"><span style="letter-spacing:0.31px;margin-right:-0.31px">Label</span></div>
<div class="a" style="left:234px;top:703px;width:100px;height:24px;background:#c9effe;box-shadow:inset 0 0 0 2px #5bb2d9;"></div>
<svg class="a" style="left:257px;top:707px" width="16" height="16" shape-rendering="crispEdges"><path d="M1 1h13v1h-13zM1 2h1v1h-1zM5 2h1v1h-1zM9 2h1v1h-1zM14 2h1v1h-1zM1 3h1v1h-1zM5 3h5v1h-5zM14 3h1v1h-1zM1 4h1v1h-1zM14 4h1v1h-1zM1 5h1v1h-1zM14 5h1v1h-1zM1 6h1v1h-1zM14 6h1v1h-1zM1 7h1v1h-1zM3 7h10v1h-10zM14 7h1v1h-1zM1 8h1v1h-1zM3 8h1v1h-1zM12 8h1v1h-1zM14 8h1v1h-1zM1 9h1v1h-1zM3 9h1v1h-1zM5 9h6v1h-6zM12 9h1v1h-1zM14 9h1v1h-1zM1 10h1v1h-1zM3 10h1v1h-1zM12 10h1v1h-1zM14 10h1v1h-1zM1 11h1v1h-1zM3 11h1v1h-1zM12 11h1v1h-1zM14 11h1v1h-1zM1 12h1v1h-1zM3 12h10v1h-10zM14 12h1v1h-1zM1 13h1v1h-1zM14 13h1v1h-1zM1 14h14v1h-14z" fill="#6c9bbc"/></svg>
<div class="a t" style="left:276.5px;top:703px;width:38px;height:24px;line-height:24px;color:#6c9bbc;text-align:left;font-size:10px;"><span style="letter-spacing:0.85px;margin-right:-0.85px">Button</span></div>
<div class="a" style="left:349px;top:703px;width:100px;height:24px;background:#c9effe;box-shadow:inset 0 0 0 1px #5bb2d9;"></div>
<svg class="a" style="left:372px;top:707px" width="16" height="16" shape-rendering="crispEdges"><path d="M7 2h1v1h-1zM9 2h1v1h-1zM7 3h1v1h-1zM9 3h1v1h-1zM6 4h2v1h-2zM9 4h2v1h-2zM6 5h2v1h-2zM9 5h2v1h-2zM5 6h1v1h-1zM7 6h1v1h-1zM9 6h3v1h-3zM5 7h1v1h-1zM7 7h1v1h-1zM9 7h3v1h-3zM4 8h1v1h-1zM7 8h1v1h-1zM9 8h4v1h-4zM4 9h1v1h-1zM7 9h1v1h-1zM9 9h4v1h-4zM3 10h1v1h-1zM7 10h1v1h-1zM9 10h5v1h-5zM3 11h1v1h-1zM7 11h1v1h-1zM9 11h5v1h-5zM2 12h6v1h-6zM9 12h6v1h-6zM2 13h6v1h-6zM9 13h6v1h-6z" fill="#6c9bbc"/></svg>
<div class="a t" style="left:391.5px;top:703px;width:38px;height:24px;line-height:24px;color:#6c9bbc;text-align:left;font-size:10px;"><span style="letter-spacing:0.76px;margin-right:-0.76px">Toggle</span></div>
<div class="a" style="left:466px;top:708px;width:15px;height:15px;box-shadow:inset 0 0 0 1px #5bb2d9;"></div>
<div class="a t" style="left:484.5px;top:696px;width:70px;height:38px;line-height:38px;color:#6c9bbc;text-align:left;font-size:10px;"><span style="letter-spacing:0.27px;margin-right:-0.27px">NoCheck</span></div>
<div class="a" style="left:574px;top:708px;width:15px;height:15px;box-shadow:inset 0 0 0 1px #5bb2d9;"></div>
<div class="a" style="left:576px;top:710px;width:11px;height:11px;background:#6c9bbc;"></div>
<div class="a t" style="left:592.5px;top:696px;width:70px;height:38px;line-height:38px;color:#6c9bbc;text-align:left;font-size:10px;"><span style="letter-spacing:0.36px;margin-right:-0.36px">Checked</span></div>
<div class="a" style="left:679px;top:710px;width:100px;height:10px;background:#c9c9c9;box-shadow:inset 0 0 0 1px #5bb2d9;"></div>
<div class="a" style="left:714px;top:712px;width:10px;height:6px;background:#6c9bbc;"></div>
<div class="a" style="left:794px;top:710px;width:100px;height:10px;background:#c9c9c9;box-shadow:inset 0 0 0 1px #5bb2d9;"></div>
<div class="a" style="left:795px;top:712px;width:40px;height:6px;background:#6c9bbc;"></div>
<div class="a" style="left:909px;top:710px;width:100px;height:10px;box-shadow:inset 0 0 0 1px #838383;"></div>
<div class="a" style="left:909px;top:710px;width:60px;height:10px;background:#97e8ff;box-shadow:inset 0 0 0 1px #5bb2d9;"></div>
<div class="a" style="left:910px;top:711px;width:58px;height:8px;background:#97e8ff;"></div>
<div class="a" style="left:1024px;top:703px;width:92px;height:24px;background:#c9c9c9;box-shadow:inset 0 0 0 1px #5bb2d9;"></div>
<div class="a" style="left:1132px;top:703px;width:92px;height:24px;background:#c9c9c9;box-shadow:inset 0 0 0 1px #5bb2d9;"></div>
<div class="a" style="left:1027px;top:706px;width:42px;height:18px;background:#c9effe;"></div>
<div class="a" style="left:1179px;top:706px;width:42px;height:18px;background:#c9effe;"></div>
<svg class="a" style="left:1028px;top:707px" width="16" height="16" shape-rendering="crispEdges"><path d="M2 2h12v1h-12zM2 3h1v1h-1zM13 3h1v1h-1zM2 4h1v1h-1zM13 4h1v1h-1zM2 5h1v1h-1zM13 5h1v1h-1zM2 6h4v1h-4zM13 6h1v1h-1zM2 7h4v1h-4zM13 7h1v1h-1zM2 8h4v1h-4zM13 8h1v1h-1zM2 9h4v1h-4zM13 9h1v1h-1zM2 10h1v1h-1zM13 10h1v1h-1zM2 11h1v1h-1zM13 11h1v1h-1zM2 12h1v1h-1zM13 12h1v1h-1zM2 13h12v1h-12z" fill="#6c9bbc"/></svg>
<div class="a t" style="left:1047.5px;top:703px;width:24px;height:24px;line-height:24px;color:#6c9bbc;text-align:left;font-size:10px;"><span style="letter-spacing:0.00px;margin-right:-0.00px">OFF</span></div>
<svg class="a" style="left:1183px;top:707px" width="16" height="16" shape-rendering="crispEdges"><path d="M2 2h12v1h-12zM2 3h1v1h-1zM13 3h1v1h-1zM2 4h1v1h-1zM13 4h1v1h-1zM2 5h1v1h-1zM13 5h1v1h-1zM2 6h1v1h-1zM10 6h4v1h-4zM2 7h1v1h-1zM10 7h4v1h-4zM2 8h1v1h-1zM10 8h4v1h-4zM2 9h1v1h-1zM10 9h4v1h-4zM2 10h1v1h-1zM13 10h1v1h-1zM2 11h1v1h-1zM13 11h1v1h-1zM2 12h1v1h-1zM13 12h1v1h-1zM2 13h12v1h-12z" fill="#6c9bbc"/></svg>
<div class="a t" style="left:1202.5px;top:703px;width:17px;height:24px;line-height:24px;color:#6c9bbc;text-align:left;font-size:10px;"><span style="letter-spacing:-0.70px;margin-right:0.70px">ON</span></div>
<div class="a" style="left:1239px;top:703px;width:106px;height:24px;background:#c9effe;box-shadow:inset 0 0 0 1px #5bb2d9;"></div>
<div class="a" style="left:1347px;top:703px;width:32px;height:24px;background:#c9effe;box-shadow:inset 0 0 0 1px #5bb2d9;"></div>
<svg class="a" style="left:1257px;top:707px" width="16" height="16" shape-rendering="crispEdges"><path d="M8 1h1v1h-1zM8 2h1v1h-1zM5 3h2v1h-2zM8 3h1v1h-1zM10 3h1v1h-1zM4 4h1v1h-1zM6 4h1v1h-1zM8 4h1v1h-1zM10 4h2v1h-2zM3 5h1v1h-1zM6 5h1v1h-1zM8 5h1v1h-1zM10 5h3v1h-3zM2 6h1v1h-1zM6 6h1v1h-1zM8 6h1v1h-1zM10 6h4v1h-4zM1 7h1v1h-1zM6 7h1v1h-1zM8 7h1v1h-1zM10 7h5v1h-5zM1 8h1v1h-1zM6 8h1v1h-1zM8 8h1v1h-1zM10 8h5v1h-5zM2 9h1v1h-1zM6 9h1v1h-1zM8 9h1v1h-1zM10 9h4v1h-4zM3 10h1v1h-1zM6 10h1v1h-1zM8 10h1v1h-1zM10 10h3v1h-3zM4 11h1v1h-1zM6 11h1v1h-1zM8 11h1v1h-1zM10 11h2v1h-2zM5 12h2v1h-2zM8 12h1v1h-1zM10 12h1v1h-1zM8 13h1v1h-1zM8 14h1v1h-1z" fill="#6c9bbc"/></svg>
<div class="a t" style="left:1276.5px;top:703px;width:53px;height:24px;line-height:24px;color:#6c9bbc;text-align:left;font-size:10px;"><span style="letter-spacing:-0.06px;margin-right:0.06px">ComboBox</span></div>
<div class="a t" style="left:1353.5px;top:703px;width:26px;height:24px;line-height:24px;color:#6c9bbc;text-align:left;font-size:10px;"><span style="letter-spacing:0.70px;margin-right:-0.70px">1/2</span></div>
<div class="a" style="left:1394px;top:703px;width:160px;height:24px;background:#c9effe;box-shadow:inset 0 0 0 1px #5bb2d9;"></div>
<svg class="a" style="left:1430px;top:707px" width="16" height="16" shape-rendering="crispEdges"><path d="M7 1h2v1h-2zM6 2h1v1h-1zM9 2h1v1h-1zM5 3h1v1h-1zM10 3h1v1h-1zM4 4h1v1h-1zM11 4h1v1h-1zM3 5h10v1h-10zM1 8h14v1h-14zM3 10h10v1h-10zM4 11h8v1h-8zM5 12h6v1h-6zM6 13h4v1h-4zM7 14h2v1h-2z" fill="#6c9bbc"/></svg>
<div class="a t" style="left:1449.5px;top:703px;width:71px;height:24px;line-height:24px;color:#6c9bbc;text-align:left;font-size:10px;"><span style="letter-spacing:0.38px;margin-right:-0.38px">DropdownBox</span></div>
<svg class="a" style="left:1537px;top:712px" width="12" height="6" viewBox="0 0 12 6"><path d="M0 0H12L6.0 6z" fill="#6c9bbc"/></svg>
<div class="a" style="left:1569px;top:703px;width:100px;height:24px;box-shadow:inset 0 0 0 1px #5bb2d9;"></div>
<div class="a t" style="left:1572.5px;top:703px;width:90px;height:24px;line-height:24px;color:#6c9bbc;text-align:left;font-size:10px;"><span style="letter-spacing:1.00px;margin-right:-1.00px">text box</span></div>
<div class="a" style="left:1684px;top:703px;width:100px;height:24px;box-shadow:inset 0 0 0 1px #5bb2d9;"></div>
<div class="a t" style="left:1727.5px;top:703px;width:21px;height:24px;line-height:24px;color:#6c9bbc;text-align:left;font-size:10px;"><span style="letter-spacing:-0.06px;margin-right:0.06px">40</span></div>
<div class="a" style="left:1799px;top:703px;width:24px;height:24px;background:#c9effe;box-shadow:inset 0 0 0 2px #5bb2d9;"></div>
<svg class="a" style="left:1807px;top:709px" width="7" height="12" viewBox="0 0 7 12"><path d="M7 0V12L0 6.0z" fill="#6c9bbc"/></svg>
<div class="a t" style="left:39.5px;top:735px;width:70px;height:38px;line-height:38px;color:#368baf;text-align:left;font-size:10px;"><span style="letter-spacing:0.03px;margin-right:-0.03px">PRESSED</span></div>
<svg class="a" style="left:138px;top:746px" width="16" height="16" shape-rendering="crispEdges"><path d="M4 1h10v1h-10zM4 2h1v1h-1zM13 2h1v1h-1zM2 3h3v1h-3zM13 3h1v1h-1zM2 4h1v1h-1zM13 4h1v1h-1zM2 5h1v1h-1zM13 5h1v1h-1zM2 6h1v1h-1zM4 6h8v1h-8zM13 6h1v1h-1zM2 7h1v1h-1zM13 7h1v1h-1zM2 8h1v1h-1zM4 8h8v1h-8zM13 8h1v1h-1zM2 9h1v1h-1zM13 9h1v1h-1zM2 10h1v1h-1zM4 10h8v1h-8zM13 10h1v1h-1zM2 11h1v1h-1zM13 11h1v1h-1zM2 12h1v1h-1zM13 12h1v1h-1zM2 13h1v1h-1zM13 13h1v1h-1zM2 14h12v1h-12z" fill="#368baf"/></svg>
<div class="a t" style="left:157.5px;top:742px;width:40px;height:24px;line-height:24px;color:#368baf;text-align:left;font-size:10px;"><span style="letter-spacing:0.31px;margin-right:-0.31px">Label</span></div>
<div class="a" style="left:234px;top:742px;width:100px;height:24px;background:#97e8ff;box-shadow:inset 0 0 0 2px #0492c7;"></div>
<svg class="a" style="left:257px;top:746px" width="16" height="16" shape-rendering="crispEdges"><path d="M1 1h13v1h-13zM1 2h1v1h-1zM5 2h1v1h-1zM9 2h1v1h-1zM14 2h1v1h-1zM1 3h1v1h-1zM5 3h5v1h-5zM14 3h1v1h-1zM1 4h1v1h-1zM14 4h1v1h-1zM1 5h1v1h-1zM14 5h1v1h-1zM1 6h1v1h-1zM14 6h1v1h-1zM1 7h1v1h-1zM3 7h10v1h-10zM14 7h1v1h-1zM1 8h1v1h-1zM3 8h1v1h-1zM12 8h1v1h-1zM14 8h1v1h-1zM1 9h1v1h-1zM3 9h1v1h-1zM5 9h6v1h-6zM12 9h1v1h-1zM14 9h1v1h-1zM1 10h1v1h-1zM3 10h1v1h-1zM12 10h1v1h-1zM14 10h1v1h-1zM1 11h1v1h-1zM3 11h1v1h-1zM12 11h1v1h-1zM14 11h1v1h-1zM1 12h1v1h-1zM3 12h10v1h-10zM14 12h1v1h-1zM1 13h1v1h-1zM14 13h1v1h-1zM1 14h14v1h-14z" fill="#368baf"/></svg>
<div class="a t" style="left:276.5px;top:742px;width:38px;height:24px;line-height:24px;color:#368baf;text-align:left;font-size:10px;"><span style="letter-spacing:0.85px;margin-right:-0.85px">Button</span></div>
<div class="a" style="left:349px;top:742px;width:100px;height:24px;background:#97e8ff;box-shadow:inset 0 0 0 1px #0492c7;"></div>
<svg class="a" style="left:372px;top:746px" width="16" height="16" shape-rendering="crispEdges"><path d="M7 2h1v1h-1zM9 2h1v1h-1zM7 3h1v1h-1zM9 3h1v1h-1zM6 4h2v1h-2zM9 4h2v1h-2zM6 5h2v1h-2zM9 5h2v1h-2zM5 6h1v1h-1zM7 6h1v1h-1zM9 6h3v1h-3zM5 7h1v1h-1zM7 7h1v1h-1zM9 7h3v1h-3zM4 8h1v1h-1zM7 8h1v1h-1zM9 8h4v1h-4zM4 9h1v1h-1zM7 9h1v1h-1zM9 9h4v1h-4zM3 10h1v1h-1zM7 10h1v1h-1zM9 10h5v1h-5zM3 11h1v1h-1zM7 11h1v1h-1zM9 11h5v1h-5zM2 12h6v1h-6zM9 12h6v1h-6zM2 13h6v1h-6zM9 13h6v1h-6z" fill="#368baf"/></svg>
<div class="a t" style="left:391.5px;top:742px;width:38px;height:24px;line-height:24px;color:#368baf;text-align:left;font-size:10px;"><span style="letter-spacing:0.76px;margin-right:-0.76px">Toggle</span></div>
<div class="a" style="left:466px;top:747px;width:15px;height:15px;box-shadow:inset 0 0 0 1px #0492c7;"></div>
<div class="a t" style="left:484.5px;top:735px;width:70px;height:38px;line-height:38px;color:#368baf;text-align:left;font-size:10px;"><span style="letter-spacing:0.27px;margin-right:-0.27px">NoCheck</span></div>
<div class="a" style="left:574px;top:747px;width:15px;height:15px;box-shadow:inset 0 0 0 1px #0492c7;"></div>
<div class="a" style="left:576px;top:749px;width:11px;height:11px;background:#368baf;"></div>
<div class="a t" style="left:592.5px;top:735px;width:70px;height:38px;line-height:38px;color:#368baf;text-align:left;font-size:10px;"><span style="letter-spacing:0.36px;margin-right:-0.36px">Checked</span></div>
<div class="a" style="left:679px;top:749px;width:100px;height:10px;background:#c9c9c9;box-shadow:inset 0 0 0 1px #0492c7;"></div>
<div class="a" style="left:714px;top:751px;width:10px;height:6px;background:#368baf;"></div>
<div class="a" style="left:794px;top:749px;width:100px;height:10px;background:#c9c9c9;box-shadow:inset 0 0 0 1px #0492c7;"></div>
<div class="a" style="left:795px;top:751px;width:40px;height:6px;background:#368baf;"></div>
<div class="a" style="left:909px;top:749px;width:100px;height:10px;box-shadow:inset 0 0 0 1px #838383;"></div>
<div class="a" style="left:909px;top:749px;width:60px;height:10px;background:#97e8ff;box-shadow:inset 0 0 0 1px #5bb2d9;"></div>
<div class="a" style="left:910px;top:750px;width:58px;height:8px;background:#97e8ff;"></div>
<div class="a" style="left:1024px;top:742px;width:92px;height:24px;background:#c9c9c9;box-shadow:inset 0 0 0 1px #0492c7;"></div>
<div class="a" style="left:1132px;top:742px;width:92px;height:24px;background:#c9c9c9;box-shadow:inset 0 0 0 1px #0492c7;"></div>
<div class="a" style="left:1027px;top:745px;width:42px;height:18px;background:#97e8ff;"></div>
<div class="a" style="left:1179px;top:745px;width:42px;height:18px;background:#97e8ff;"></div>
<svg class="a" style="left:1028px;top:746px" width="16" height="16" shape-rendering="crispEdges"><path d="M2 2h12v1h-12zM2 3h1v1h-1zM13 3h1v1h-1zM2 4h1v1h-1zM13 4h1v1h-1zM2 5h1v1h-1zM13 5h1v1h-1zM2 6h4v1h-4zM13 6h1v1h-1zM2 7h4v1h-4zM13 7h1v1h-1zM2 8h4v1h-4zM13 8h1v1h-1zM2 9h4v1h-4zM13 9h1v1h-1zM2 10h1v1h-1zM13 10h1v1h-1zM2 11h1v1h-1zM13 11h1v1h-1zM2 12h1v1h-1zM13 12h1v1h-1zM2 13h12v1h-12z" fill="#368baf"/></svg>
<div class="a t" style="left:1047.5px;top:742px;width:24px;height:24px;line-height:24px;color:#368baf;text-align:left;font-size:10px;"><span style="letter-spacing:0.00px;margin-right:-0.00px">OFF</span></div>
<svg class="a" style="left:1183px;top:746px" width="16" height="16" shape-rendering="crispEdges"><path d="M2 2h12v1h-12zM2 3h1v1h-1zM13 3h1v1h-1zM2 4h1v1h-1zM13 4h1v1h-1zM2 5h1v1h-1zM13 5h1v1h-1zM2 6h1v1h-1zM10 6h4v1h-4zM2 7h1v1h-1zM10 7h4v1h-4zM2 8h1v1h-1zM10 8h4v1h-4zM2 9h1v1h-1zM10 9h4v1h-4zM2 10h1v1h-1zM13 10h1v1h-1zM2 11h1v1h-1zM13 11h1v1h-1zM2 12h1v1h-1zM13 12h1v1h-1zM2 13h12v1h-12z" fill="#368baf"/></svg>
<div class="a t" style="left:1202.5px;top:742px;width:17px;height:24px;line-height:24px;color:#368baf;text-align:left;font-size:10px;"><span style="letter-spacing:-0.70px;margin-right:0.70px">ON</span></div>
<div class="a" style="left:1239px;top:742px;width:106px;height:24px;background:#97e8ff;box-shadow:inset 0 0 0 1px #0492c7;"></div>
<div class="a" style="left:1347px;top:742px;width:32px;height:24px;background:#97e8ff;box-shadow:inset 0 0 0 1px #0492c7;"></div>
<svg class="a" style="left:1257px;top:746px" width="16" height="16" shape-rendering="crispEdges"><path d="M8 1h1v1h-1zM8 2h1v1h-1zM5 3h2v1h-2zM8 3h1v1h-1zM10 3h1v1h-1zM4 4h1v1h-1zM6 4h1v1h-1zM8 4h1v1h-1zM10 4h2v1h-2zM3 5h1v1h-1zM6 5h1v1h-1zM8 5h1v1h-1zM10 5h3v1h-3zM2 6h1v1h-1zM6 6h1v1h-1zM8 6h1v1h-1zM10 6h4v1h-4zM1 7h1v1h-1zM6 7h1v1h-1zM8 7h1v1h-1zM10 7h5v1h-5zM1 8h1v1h-1zM6 8h1v1h-1zM8 8h1v1h-1zM10 8h5v1h-5zM2 9h1v1h-1zM6 9h1v1h-1zM8 9h1v1h-1zM10 9h4v1h-4zM3 10h1v1h-1zM6 10h1v1h-1zM8 10h1v1h-1zM10 10h3v1h-3zM4 11h1v1h-1zM6 11h1v1h-1zM8 11h1v1h-1zM10 11h2v1h-2zM5 12h2v1h-2zM8 12h1v1h-1zM10 12h1v1h-1zM8 13h1v1h-1zM8 14h1v1h-1z" fill="#368baf"/></svg>
<div class="a t" style="left:1276.5px;top:742px;width:53px;height:24px;line-height:24px;color:#368baf;text-align:left;font-size:10px;"><span style="letter-spacing:-0.06px;margin-right:0.06px">ComboBox</span></div>
<div class="a t" style="left:1353.5px;top:742px;width:26px;height:24px;line-height:24px;color:#368baf;text-align:left;font-size:10px;"><span style="letter-spacing:0.70px;margin-right:-0.70px">1/2</span></div>
<div class="a" style="left:1394px;top:742px;width:160px;height:24px;background:#97e8ff;box-shadow:inset 0 0 0 1px #0492c7;"></div>
<svg class="a" style="left:1430px;top:746px" width="16" height="16" shape-rendering="crispEdges"><path d="M7 1h2v1h-2zM6 2h1v1h-1zM9 2h1v1h-1zM5 3h1v1h-1zM10 3h1v1h-1zM4 4h1v1h-1zM11 4h1v1h-1zM3 5h10v1h-10zM1 8h14v1h-14zM3 10h10v1h-10zM4 11h8v1h-8zM5 12h6v1h-6zM6 13h4v1h-4zM7 14h2v1h-2z" fill="#368baf"/></svg>
<div class="a t" style="left:1449.5px;top:742px;width:71px;height:24px;line-height:24px;color:#368baf;text-align:left;font-size:10px;"><span style="letter-spacing:0.38px;margin-right:-0.38px">DropdownBox</span></div>
<svg class="a" style="left:1537px;top:751px" width="12" height="6" viewBox="0 0 12 6"><path d="M0 0H12L6.0 6z" fill="#368baf"/></svg>
<div class="a" style="left:1569px;top:742px;width:100px;height:24px;background:#97e8ff;box-shadow:inset 0 0 0 1px #0492c7;"></div>
<div class="a t" style="left:1572.5px;top:742px;width:90px;height:24px;line-height:24px;color:#368baf;text-align:left;font-size:10px;"><span style="letter-spacing:1.00px;margin-right:-1.00px">text box</span></div>
<div class="a" style="left:1684px;top:742px;width:100px;height:24px;background:#97e8ff;box-shadow:inset 0 0 0 1px #0492c7;"></div>
<div class="a t" style="left:1727.5px;top:742px;width:21px;height:24px;line-height:24px;color:#368baf;text-align:left;font-size:10px;"><span style="letter-spacing:-0.06px;margin-right:0.06px">40</span></div>
<div class="a" style="left:1799px;top:742px;width:24px;height:24px;background:#97e8ff;box-shadow:inset 0 0 0 2px #0492c7;"></div>
<svg class="a" style="left:1807px;top:748px" width="7" height="12" viewBox="0 0 7 12"><path d="M7 0V12L0 6.0z" fill="#368baf"/></svg>
<div class="a t" style="left:39.5px;top:774px;width:70px;height:38px;line-height:38px;color:#aeb7b8;text-align:left;font-size:10px;"><span style="letter-spacing:0.19px;margin-right:-0.19px">DISABLED</span></div>
<svg class="a" style="left:138px;top:785px" width="16" height="16" shape-rendering="crispEdges"><path d="M4 1h10v1h-10zM4 2h1v1h-1zM13 2h1v1h-1zM2 3h3v1h-3zM13 3h1v1h-1zM2 4h1v1h-1zM13 4h1v1h-1zM2 5h1v1h-1zM13 5h1v1h-1zM2 6h1v1h-1zM4 6h8v1h-8zM13 6h1v1h-1zM2 7h1v1h-1zM13 7h1v1h-1zM2 8h1v1h-1zM4 8h8v1h-8zM13 8h1v1h-1zM2 9h1v1h-1zM13 9h1v1h-1zM2 10h1v1h-1zM4 10h8v1h-8zM13 10h1v1h-1zM2 11h1v1h-1zM13 11h1v1h-1zM2 12h1v1h-1zM13 12h1v1h-1zM2 13h1v1h-1zM13 13h1v1h-1zM2 14h12v1h-12z" fill="#aeb7b8"/></svg>
<div class="a t" style="left:157.5px;top:781px;width:40px;height:24px;line-height:24px;color:#aeb7b8;text-align:left;font-size:10px;"><span style="letter-spacing:0.31px;margin-right:-0.31px">Label</span></div>
<div class="a" style="left:234px;top:781px;width:100px;height:24px;background:#e6e9e9;box-shadow:inset 0 0 0 2px #b5c1c2;"></div>
<svg class="a" style="left:257px;top:785px" width="16" height="16" shape-rendering="crispEdges"><path d="M1 1h13v1h-13zM1 2h1v1h-1zM5 2h1v1h-1zM9 2h1v1h-1zM14 2h1v1h-1zM1 3h1v1h-1zM5 3h5v1h-5zM14 3h1v1h-1zM1 4h1v1h-1zM14 4h1v1h-1zM1 5h1v1h-1zM14 5h1v1h-1zM1 6h1v1h-1zM14 6h1v1h-1zM1 7h1v1h-1zM3 7h10v1h-10zM14 7h1v1h-1zM1 8h1v1h-1zM3 8h1v1h-1zM12 8h1v1h-1zM14 8h1v1h-1zM1 9h1v1h-1zM3 9h1v1h-1zM5 9h6v1h-6zM12 9h1v1h-1zM14 9h1v1h-1zM1 10h1v1h-1zM3 10h1v1h-1zM12 10h1v1h-1zM14 10h1v1h-1zM1 11h1v1h-1zM3 11h1v1h-1zM12 11h1v1h-1zM14 11h1v1h-1zM1 12h1v1h-1zM3 12h10v1h-10zM14 12h1v1h-1zM1 13h1v1h-1zM14 13h1v1h-1zM1 14h14v1h-14z" fill="#aeb7b8"/></svg>
<div class="a t" style="left:276.5px;top:781px;width:38px;height:24px;line-height:24px;color:#aeb7b8;text-align:left;font-size:10px;"><span style="letter-spacing:0.85px;margin-right:-0.85px">Button</span></div>
<div class="a" style="left:349px;top:781px;width:100px;height:24px;background:#e6e9e9;box-shadow:inset 0 0 0 1px #b5c1c2;"></div>
<svg class="a" style="left:372px;top:785px" width="16" height="16" shape-rendering="crispEdges"><path d="M7 2h1v1h-1zM9 2h1v1h-1zM7 3h1v1h-1zM9 3h1v1h-1zM6 4h2v1h-2zM9 4h2v1h-2zM6 5h2v1h-2zM9 5h2v1h-2zM5 6h1v1h-1zM7 6h1v1h-1zM9 6h3v1h-3zM5 7h1v1h-1zM7 7h1v1h-1zM9 7h3v1h-3zM4 8h1v1h-1zM7 8h1v1h-1zM9 8h4v1h-4zM4 9h1v1h-1zM7 9h1v1h-1zM9 9h4v1h-4zM3 10h1v1h-1zM7 10h1v1h-1zM9 10h5v1h-5zM3 11h1v1h-1zM7 11h1v1h-1zM9 11h5v1h-5zM2 12h6v1h-6zM9 12h6v1h-6zM2 13h6v1h-6zM9 13h6v1h-6z" fill="#aeb7b8"/></svg>
<div class="a t" style="left:391.5px;top:781px;width:38px;height:24px;line-height:24px;color:#aeb7b8;text-align:left;font-size:10px;"><span style="letter-spacing:0.76px;margin-right:-0.76px">Toggle</span></div>
<div class="a" style="left:466px;top:786px;width:15px;height:15px;box-shadow:inset 0 0 0 1px #b5c1c2;"></div>
<div class="a t" style="left:484.5px;top:774px;width:70px;height:38px;line-height:38px;color:#aeb7b8;text-align:left;font-size:10px;"><span style="letter-spacing:0.27px;margin-right:-0.27px">NoCheck</span></div>
<div class="a" style="left:574px;top:786px;width:15px;height:15px;box-shadow:inset 0 0 0 1px #b5c1c2;"></div>
<div class="a" style="left:576px;top:788px;width:11px;height:11px;background:#aeb7b8;"></div>
<div class="a t" style="left:592.5px;top:774px;width:70px;height:38px;line-height:38px;color:#aeb7b8;text-align:left;font-size:10px;"><span style="letter-spacing:0.36px;margin-right:-0.36px">Checked</span></div>
<div class="a" style="left:679px;top:788px;width:100px;height:10px;background:#e6e9e9;box-shadow:inset 0 0 0 1px #b5c1c2;"></div>
<div class="a" style="left:714px;top:790px;width:10px;height:6px;background:#aeb7b8;"></div>
<div class="a" style="left:794px;top:788px;width:100px;height:10px;background:#e6e9e9;box-shadow:inset 0 0 0 1px #b5c1c2;"></div>
<div class="a" style="left:795px;top:790px;width:40px;height:6px;background:#aeb7b8;"></div>
<div class="a" style="left:909px;top:788px;width:100px;height:10px;box-shadow:inset 0 0 0 1px #b5c1c2;"></div>
<div class="a" style="left:1024px;top:781px;width:92px;height:24px;background:#c9c9c9;"></div>
<div class="a" style="left:1132px;top:781px;width:92px;height:24px;background:#c9c9c9;"></div>
<svg class="a" style="left:1028px;top:785px" width="16" height="16" shape-rendering="crispEdges"><path d="M2 2h12v1h-12zM2 3h1v1h-1zM13 3h1v1h-1zM2 4h1v1h-1zM13 4h1v1h-1zM2 5h1v1h-1zM13 5h1v1h-1zM2 6h4v1h-4zM13 6h1v1h-1zM2 7h4v1h-4zM13 7h1v1h-1zM2 8h4v1h-4zM13 8h1v1h-1zM2 9h4v1h-4zM13 9h1v1h-1zM2 10h1v1h-1zM13 10h1v1h-1zM2 11h1v1h-1zM13 11h1v1h-1zM2 12h1v1h-1zM13 12h1v1h-1zM2 13h12v1h-12z" fill="#aeb7b8"/></svg>
<div class="a t" style="left:1047.5px;top:781px;width:24px;height:24px;line-height:24px;color:#aeb7b8;text-align:left;font-size:10px;"><span style="letter-spacing:0.00px;margin-right:-0.00px">OFF</span></div>
<svg class="a" style="left:1183px;top:785px" width="16" height="16" shape-rendering="crispEdges"><path d="M2 2h12v1h-12zM2 3h1v1h-1zM13 3h1v1h-1zM2 4h1v1h-1zM13 4h1v1h-1zM2 5h1v1h-1zM13 5h1v1h-1zM2 6h1v1h-1zM10 6h4v1h-4zM2 7h1v1h-1zM10 7h4v1h-4zM2 8h1v1h-1zM10 8h4v1h-4zM2 9h1v1h-1zM10 9h4v1h-4zM2 10h1v1h-1zM13 10h1v1h-1zM2 11h1v1h-1zM13 11h1v1h-1zM2 12h1v1h-1zM13 12h1v1h-1zM2 13h12v1h-12z" fill="#aeb7b8"/></svg>
<div class="a t" style="left:1202.5px;top:781px;width:17px;height:24px;line-height:24px;color:#aeb7b8;text-align:left;font-size:10px;"><span style="letter-spacing:-0.70px;margin-right:0.70px">ON</span></div>
<div class="a" style="left:1239px;top:781px;width:106px;height:24px;background:#e6e9e9;box-shadow:inset 0 0 0 1px #b5c1c2;"></div>
<div class="a" style="left:1347px;top:781px;width:32px;height:24px;background:#e6e9e9;box-shadow:inset 0 0 0 1px #b5c1c2;"></div>
<svg class="a" style="left:1257px;top:785px" width="16" height="16" shape-rendering="crispEdges"><path d="M8 1h1v1h-1zM8 2h1v1h-1zM5 3h2v1h-2zM8 3h1v1h-1zM10 3h1v1h-1zM4 4h1v1h-1zM6 4h1v1h-1zM8 4h1v1h-1zM10 4h2v1h-2zM3 5h1v1h-1zM6 5h1v1h-1zM8 5h1v1h-1zM10 5h3v1h-3zM2 6h1v1h-1zM6 6h1v1h-1zM8 6h1v1h-1zM10 6h4v1h-4zM1 7h1v1h-1zM6 7h1v1h-1zM8 7h1v1h-1zM10 7h5v1h-5zM1 8h1v1h-1zM6 8h1v1h-1zM8 8h1v1h-1zM10 8h5v1h-5zM2 9h1v1h-1zM6 9h1v1h-1zM8 9h1v1h-1zM10 9h4v1h-4zM3 10h1v1h-1zM6 10h1v1h-1zM8 10h1v1h-1zM10 10h3v1h-3zM4 11h1v1h-1zM6 11h1v1h-1zM8 11h1v1h-1zM10 11h2v1h-2zM5 12h2v1h-2zM8 12h1v1h-1zM10 12h1v1h-1zM8 13h1v1h-1zM8 14h1v1h-1z" fill="#aeb7b8"/></svg>
<div class="a t" style="left:1276.5px;top:781px;width:53px;height:24px;line-height:24px;color:#aeb7b8;text-align:left;font-size:10px;"><span style="letter-spacing:-0.06px;margin-right:0.06px">ComboBox</span></div>
<div class="a t" style="left:1353.5px;top:781px;width:26px;height:24px;line-height:24px;color:#aeb7b8;text-align:left;font-size:10px;"><span style="letter-spacing:0.70px;margin-right:-0.70px">1/2</span></div>
<div class="a" style="left:1394px;top:781px;width:160px;height:24px;background:#e6e9e9;box-shadow:inset 0 0 0 1px #b5c1c2;"></div>
<svg class="a" style="left:1430px;top:785px" width="16" height="16" shape-rendering="crispEdges"><path d="M7 1h2v1h-2zM6 2h1v1h-1zM9 2h1v1h-1zM5 3h1v1h-1zM10 3h1v1h-1zM4 4h1v1h-1zM11 4h1v1h-1zM3 5h10v1h-10zM1 8h14v1h-14zM3 10h10v1h-10zM4 11h8v1h-8zM5 12h6v1h-6zM6 13h4v1h-4zM7 14h2v1h-2z" fill="#aeb7b8"/></svg>
<div class="a t" style="left:1449.5px;top:781px;width:71px;height:24px;line-height:24px;color:#aeb7b8;text-align:left;font-size:10px;"><span style="letter-spacing:0.38px;margin-right:-0.38px">DropdownBox</span></div>
<svg class="a" style="left:1537px;top:790px" width="12" height="6" viewBox="0 0 12 6"><path d="M0 0H12L6.0 6z" fill="#aeb7b8"/></svg>
<div class="a" style="left:1569px;top:781px;width:100px;height:24px;background:#e6e9e9;box-shadow:inset 0 0 0 1px #b5c1c2;"></div>
<div class="a t" style="left:1572.5px;top:781px;width:90px;height:24px;line-height:24px;color:#aeb7b8;text-align:left;font-size:10px;"><span style="letter-spacing:1.00px;margin-right:-1.00px">text box</span></div>
<div class="a" style="left:1684px;top:781px;width:100px;height:24px;background:#e6e9e9;box-shadow:inset 0 0 0 1px #b5c1c2;"></div>
<div class="a t" style="left:1727.5px;top:781px;width:21px;height:24px;line-height:24px;color:#aeb7b8;text-align:left;font-size:10px;"><span style="letter-spacing:-0.06px;margin-right:0.06px">40</span></div>
<div class="a" style="left:1799px;top:781px;width:24px;height:24px;background:#e6e9e9;box-shadow:inset 0 0 0 2px #b5c1c2;"></div>
<svg class="a" style="left:1807px;top:787px" width="7" height="12" viewBox="0 0 7 12"><path d="M7 0V12L0 6.0z" fill="#aeb7b8"/></svg>
<div class="a" style="left:0px;top:825px;width:1812px;height:12px;background:#c9c9c9;box-shadow:inset 0 0 0 1px #838383;"></div>
<div class="a" style="left:1px;top:826px;width:1710px;height:10px;background:#97e8ff;"></div>
<div class="a" style="left:0px;top:836px;width:1812px;height:24px;background:#c9c9c9;box-shadow:inset 0 0 0 1px #838383;"></div>
<div class="a" style="left:507px;top:836px;width:1px;height:24px;background:#838383"></div>
<div class="a" style="left:915px;top:836px;width:1px;height:24px;background:#838383"></div>
<div class="a" style="left:1234px;top:836px;width:1px;height:24px;background:#838383"></div>
<div class="a" style="left:1393px;top:836px;width:1px;height:24px;background:#838383"></div>
<div class="a" style="left:1572px;top:836px;width:1px;height:24px;background:#838383"></div>
<div class="a t" style="left:86.5px;top:836px;width:70px;height:24px;line-height:24px;color:#686868;text-align:left;font-size:10px;"><span style="letter-spacing:0.23px;margin-right:-0.23px">Style Name:</span></div>
<div class="a" style="left:169px;top:836px;width:150px;height:24px;background:#f5f5f5;box-shadow:inset 0 0 0 1px #838383;"></div>
<div class="a t" style="left:173.5px;top:836px;width:100px;height:24px;line-height:24px;color:#686868;text-align:left;font-size:10px;"><span style="letter-spacing:0.46px;margin-right:-0.46px">Light</span></div>
<div class="a t" style="left:345.5px;top:836px;width:142px;height:24px;line-height:24px;color:#686868;text-align:left;font-size:10px;"><span style="letter-spacing:0.18px;margin-right:-0.18px">CHANGED PROPERTIES: 0</span></div>
<div class="a t" style="left:1000.5px;top:836px;width:156px;height:24px;line-height:24px;color:#686868;text-align:left;font-size:10px;white-space:pre;"><span style="letter-spacing:0.65px;margin-right:-0.65px">Font File:  [NOT AVAILABLE]</span></div>
<div class="a t" style="left:1272.5px;top:836px;width:89px;height:24px;line-height:24px;color:#686868;text-align:left;font-size:10px;"><span style="letter-spacing:0.41px;margin-right:-0.41px">Codepoints: 224</span></div>
<div class="a t" style="left:1434.5px;top:836px;width:103px;height:24px;line-height:24px;color:#686868;text-align:left;font-size:10px;"><span style="letter-spacing:0.24px;margin-right:-0.24px">Atlas Size: 128x128</span></div>
<div class="a t" style="left:1620.5px;top:836px;width:150px;height:24px;line-height:24px;color:#686868;text-align:left;font-size:10px;"><span style="letter-spacing:0.53px;margin-right:-0.53px">Font white rec: [41, 46, 2, 8]</span></div>
</body></html>
